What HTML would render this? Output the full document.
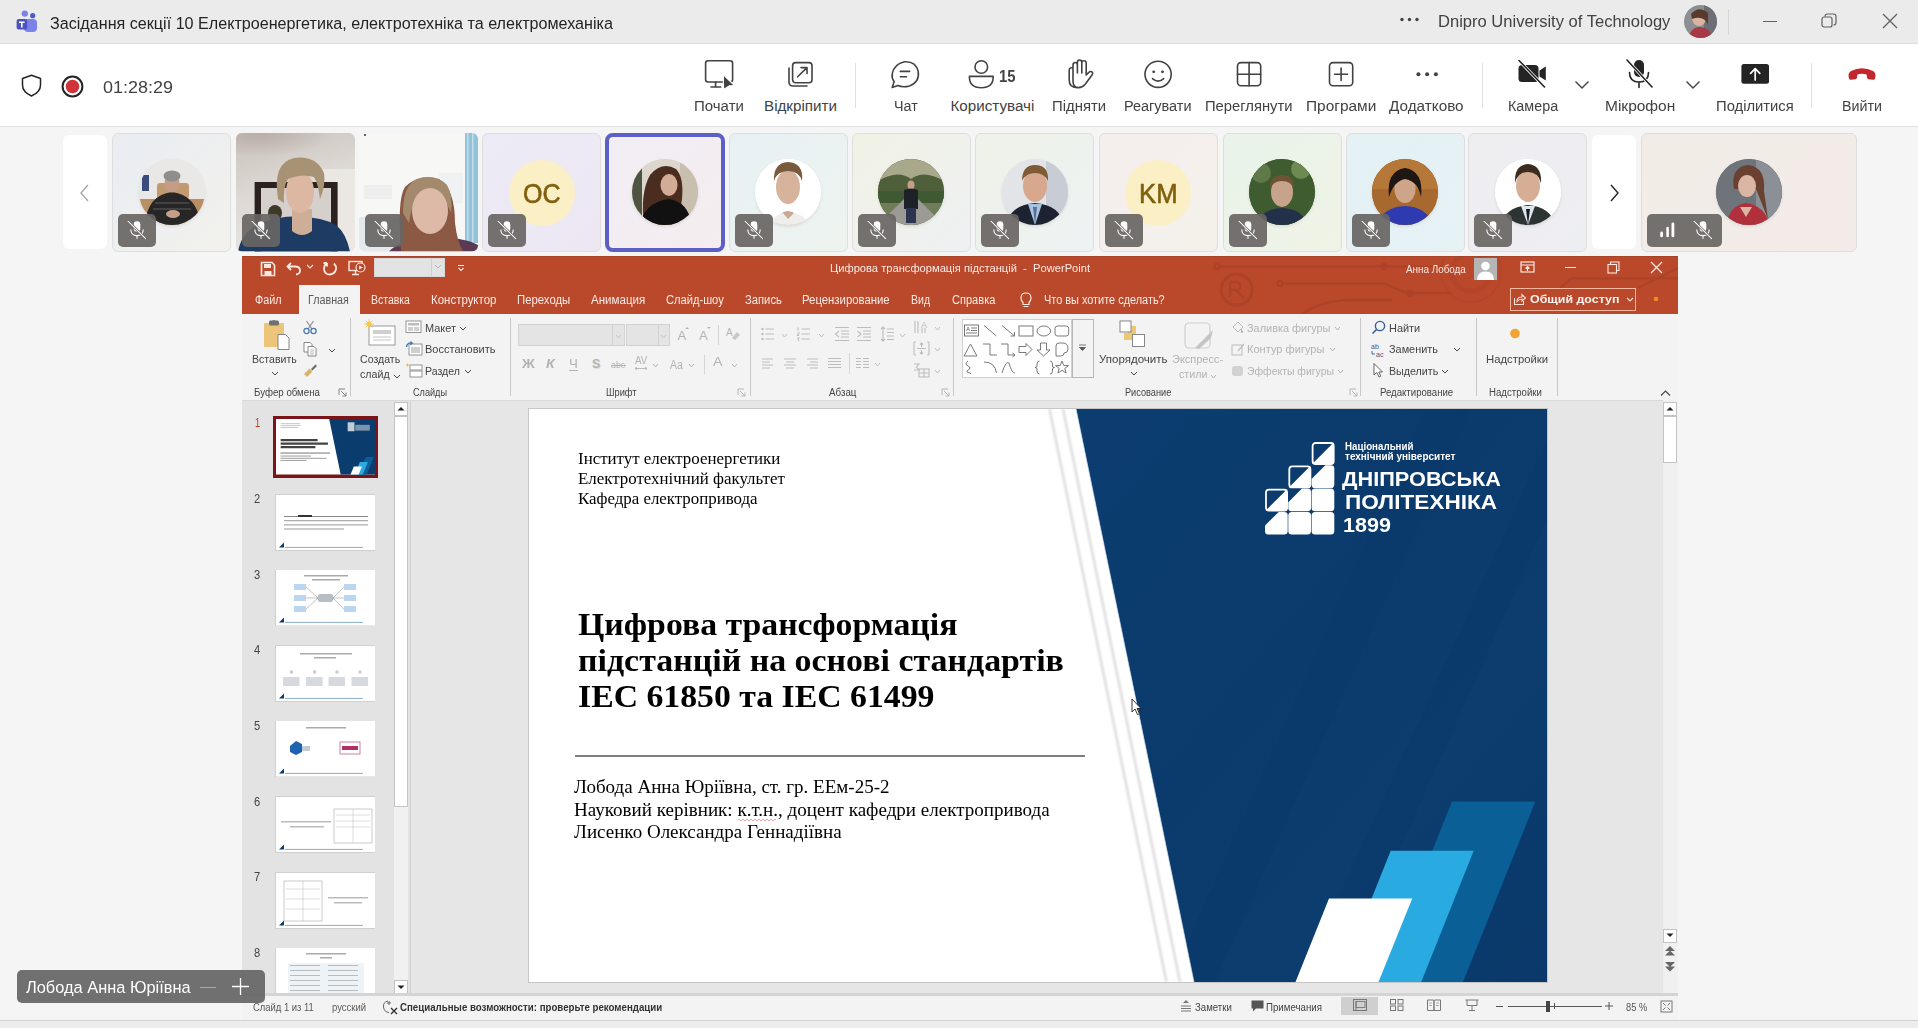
<!DOCTYPE html>
<html><head><meta charset="utf-8"><style>
html,body{margin:0;padding:0;}
body{width:1918px;height:1028px;position:relative;overflow:hidden;background:#f5f5f5;font-family:'Liberation Sans', sans-serif;}
.t{position:absolute;white-space:nowrap;transform-origin:0 0;}
.r{position:absolute;}
</style></head><body>
<div class="r" style="left:0px;top:0px;width:1918px;height:43px;background:#ebebeb;"></div>
<div class="r" style="left:0px;top:43px;width:1918px;height:1px;background:#dcdcdc;"></div>
<div class="r" style="left:0px;top:44px;width:1918px;height:82px;background:#ffffff;"></div>
<div class="r" style="left:0px;top:126px;width:1918px;height:1px;background:#e1e1e1;"></div>
<svg class="r" style="left:16px;top:10px;" width="22" height="23" viewBox="0 0 22 23">
<circle cx="8.8" cy="3.6" r="3.2" fill="#7b83eb"/><circle cx="16.7" cy="5.7" r="2.6" fill="#5059c9"/>
<rect x="8" y="9" width="13" height="13" rx="4" fill="#7b83eb"/>
<rect x="0.6" y="9" width="10.6" height="10.4" rx="2" fill="#4b53bc"/>
<path d="M3 11.5h5.6v1.5H6.6V17.5H5V13H3z" fill="#fff"/></svg>
<div id="title" class="t" style="left:50px;top:14.86px;font-size:17.2px;line-height:17.2px;color:#242424;font-weight:400;font-family:'Liberation Sans', sans-serif;transform:scaleX(0.9383);">Засідання секції 10 Електроенергетика, електротехніка та електромеханіка</div>
<svg class="r" style="left:1400px;top:17px;" width="19" height="5" viewBox="0 0 19 5"><circle cx="2" cy="2.5" r="1.7" fill="#424242"/><circle cx="9.5" cy="2.5" r="1.7" fill="#424242"/><circle cx="17" cy="2.5" r="1.7" fill="#424242"/></svg>
<div id="org" class="t" style="left:1438px;top:12.86px;font-size:17.2px;line-height:17.2px;color:#424242;font-weight:400;font-family:'Liberation Sans', sans-serif;transform:scaleX(0.9627);">Dnipro University of Technology</div>
<svg class="r" style="left:1684px;top:5px;" width="33" height="33" viewBox="0 0 33 33"><defs><clipPath id="ca"><circle cx="16.5" cy="16.5" r="16.5"/></clipPath></defs>
<g clip-path="url(#ca)"><rect width="33" height="33" fill="#8d8f94"/><rect x="20" y="0" width="13" height="33" fill="#6c7076"/>
<ellipse cx="15" cy="13" rx="7" ry="8" fill="#d9b4a0"/><path d="M7 9 Q15 0 24 8 L24 20 Q20 10 8 14z" fill="#5a3a2c"/>
<path d="M4 33 Q8 21 16 22 Q26 22 28 33z" fill="#a83a45"/></g></svg>
<div class="r" style="left:1728px;top:9px;width:1px;height:26px;background:#d6d6d6;"></div>
<div class="r" style="left:1763px;top:21px;width:14px;height:1.2px;background:#616161;"></div>
<svg class="r" style="left:1821px;top:13px;" width="16" height="16" viewBox="0 0 16 16"><rect x="1" y="4" width="10" height="10" rx="2" fill="none" stroke="#616161" stroke-width="1.2"/><path d="M4 3.5 Q4 1 6.5 1 H12.5 Q15 1 15 3.5 V9.5 Q15 12 12.5 12" fill="none" stroke="#616161" stroke-width="1.2"/></svg>
<svg class="r" style="left:1882px;top:13px;" width="16" height="16" viewBox="0 0 16 16"><path d="M1 1L15 15M15 1L1 15" stroke="#616161" stroke-width="1.3"/></svg>
<svg class="r" style="left:21px;top:74px;" width="21" height="23" viewBox="0 0 21 23"><path d="M10.5 1.2 L19.5 4.5 V11 Q19.5 18 10.5 22 Q1.5 18 1.5 11 V4.5z" fill="none" stroke="#242424" stroke-width="1.5" stroke-linejoin="round"/></svg>
<svg class="r" style="left:61px;top:75px;" width="23" height="23" viewBox="0 0 23 23"><circle cx="11.5" cy="11.5" r="9.9" fill="none" stroke="#242424" stroke-width="2"/><circle cx="11.5" cy="11.5" r="6.8" fill="#d13438"/></svg>
<div id="timer" class="t" style="left:103px;top:78.86px;font-size:17.2px;line-height:17.2px;color:#424242;font-weight:400;font-family:'Liberation Sans', sans-serif;transform:scaleX(1.0448);">01:28:29</div>
<svg class="r" style="left:700px;top:56px;" width="40" height="38" viewBox="0 0 40 38"><rect x="5.6" y="4.8" width="27" height="21.2" rx="2.5" fill="none" stroke="#424242" stroke-width="1.6" stroke-linecap="round" stroke-linejoin="round"/><path d="M15.6 26v5M11 31h9.7" fill="none" stroke="#424242" stroke-width="1.6" stroke-linecap="round" stroke-linejoin="round"/><path d="M23.2 18.5 L34.6 29.6 L29.5 29.8 L23.6 33.5z" fill="#424242" stroke="#fff" stroke-width="1.2"/></svg>
<svg class="r" style="left:785px;top:58px;" width="32" height="32" viewBox="0 0 32 32"><rect x="7.6" y="4.6" width="19.4" height="20.1" rx="3" fill="none" stroke="#424242" stroke-width="1.6" stroke-linecap="round" stroke-linejoin="round"/><path d="M4 10 V24 Q4 28 8 28 H22" fill="none" stroke="#424242" stroke-width="1.6" stroke-linecap="round" stroke-linejoin="round"/><path d="M12.6 18.8 L22 9.6 M16 9.6 H22 V15.6" fill="none" stroke="#424242" stroke-width="1.6" stroke-linecap="round" stroke-linejoin="round"/></svg>
<div class="r" style="left:855px;top:63px;width:1px;height:45px;background:#e0e0e0;"></div>
<svg class="r" style="left:888px;top:58px;" width="34" height="34" viewBox="0 0 34 34"><path d="M4.2 29.5 L6.1 23.8 Q3.4 19.7 4.3 15.6 Q6 6.2 16.5 3.8 Q27.7 3 30.2 13.4 Q31.8 24 21.5 28 Q15 29.8 9.8 27.6 Z" fill="none" stroke="#424242" stroke-width="1.6" stroke-linecap="round" stroke-linejoin="round"/><path d="M12.3 13.4 H21.6 M12.3 18.8 H18.5" fill="none" stroke="#424242" stroke-width="1.6" stroke-linecap="round" stroke-linejoin="round"/></svg>
<svg class="r" style="left:965px;top:56px;" width="32" height="34" viewBox="0 0 32 34"><circle cx="16.3" cy="11" r="6.3" fill="none" stroke="#424242" stroke-width="1.6" stroke-linecap="round" stroke-linejoin="round"/><path d="M4.4 20.4 H28.2 Q28.4 31.7 16.3 31.7 Q4.2 31.7 4.4 20.4z" fill="none" stroke="#424242" stroke-width="1.6" stroke-linecap="round" stroke-linejoin="round"/></svg>
<div id="cnt" class="t" style="left:999.4px;top:68.61px;font-size:15.8px;line-height:15.8px;color:#424242;font-weight:700;font-family:'Liberation Sans', sans-serif;transform:scaleX(0.9389);">15</div>
<svg class="r" style="left:1065px;top:56px;" width="30" height="36" viewBox="0 0 30 36"><path d="M8 22 V9 Q8 6.5 10.2 6.5 Q12.4 6.5 12.4 9 V17 M12.4 17 V6.5 Q12.4 4 14.6 4 Q16.8 4 16.8 6.5 V17 M16.8 17 V7 Q16.8 4.8 19 4.8 Q21.2 4.8 21.2 7 V19 L23.6 16.6 Q25.6 14.6 27.4 16.3 Q28.3 17.4 27 19 L20 28.5 Q17.5 31.6 13.5 31.6 Q8 31.6 8 25 V22 M8 12 Q4.2 11 4.2 14.8 V24 Q4.2 31.5 12 31.6" fill="none" stroke="#424242" stroke-width="1.6" stroke-linecap="round" stroke-linejoin="round"/></svg>
<svg class="r" style="left:1142px;top:58px;" width="34" height="34" viewBox="0 0 34 34"><circle cx="16.1" cy="16.3" r="13.1" fill="none" stroke="#424242" stroke-width="1.6" stroke-linecap="round" stroke-linejoin="round"/><circle cx="11.7" cy="13.8" r="1.4" fill="#424242"/><circle cx="20.5" cy="13.8" r="1.4" fill="#424242"/><path d="M10.5 20.6 Q16.1 25.6 21.7 20.6" fill="none" stroke="#424242" stroke-width="1.6" stroke-linecap="round" stroke-linejoin="round"/></svg>
<svg class="r" style="left:1234px;top:60px;" width="30" height="30" viewBox="0 0 30 30"><rect x="3.5" y="2.6" width="23.2" height="23.2" rx="3.5" fill="none" stroke="#424242" stroke-width="1.6" stroke-linecap="round" stroke-linejoin="round"/><path d="M15.1 2.6 V25.8 M3.5 14.2 H26.7" fill="none" stroke="#424242" stroke-width="1.6" stroke-linecap="round" stroke-linejoin="round"/></svg>
<svg class="r" style="left:1326px;top:60px;" width="30" height="30" viewBox="0 0 30 30"><rect x="3.5" y="2.6" width="23.2" height="23.2" rx="3.5" fill="none" stroke="#424242" stroke-width="1.6" stroke-linecap="round" stroke-linejoin="round"/><path d="M15.1 8 V20.5 M8.6 14.2 H21.6" fill="none" stroke="#424242" stroke-width="1.6" stroke-linecap="round" stroke-linejoin="round"/></svg>
<svg class="r" style="left:1414px;top:70px;" width="26" height="9" viewBox="0 0 26 9"><circle cx="4.4" cy="4.3" r="2" fill="#424242"/><circle cx="13.1" cy="4.3" r="2" fill="#424242"/><circle cx="21.9" cy="4.3" r="2" fill="#424242"/></svg>
<div class="r" style="left:1482px;top:63px;width:1px;height:45px;background:#e0e0e0;"></div>
<svg class="r" style="left:1514px;top:56px;" width="36" height="36" viewBox="0 0 36 36"><rect x="4.5" y="9" width="20" height="17" rx="3.5" fill="#242424"/><path d="M25.5 14.5 L31.8 10.5 V24.5 L25.5 20.5z" fill="#242424"/><path d="M5 4.5 L30.5 31" stroke="#fff" stroke-width="3.2"/><path d="M5 4.5 L30.5 31" stroke="#242424" stroke-width="1.6" stroke-linecap="round"/></svg>
<svg class="r" style="left:1573px;top:79px;" width="18" height="12" viewBox="0 0 18 12"><path d="M2.5 2.5 L9 9 L15.5 2.5" fill="none" stroke="#424242" stroke-width="1.4"/></svg>
<svg class="r" style="left:1622px;top:56px;" width="36" height="36" viewBox="0 0 36 36"><rect x="12" y="4" width="10" height="17" rx="5" fill="#242424"/><path d="M7.5 16.5 Q7.5 26 17 26 Q26.5 26 26.5 16.5 M17 26 V31.5" fill="none" stroke="#242424" stroke-width="1.6" stroke-linecap="round"/><path d="M5 4 L30 31" stroke="#fff" stroke-width="3.2"/><path d="M5 4 L30 31" stroke="#242424" stroke-width="1.6" stroke-linecap="round"/></svg>
<svg class="r" style="left:1684px;top:79px;" width="18" height="12" viewBox="0 0 18 12"><path d="M2.5 2.5 L9 9 L15.5 2.5" fill="none" stroke="#424242" stroke-width="1.4"/></svg>
<svg class="r" style="left:1738px;top:60px;" width="34" height="30" viewBox="0 0 34 30"><rect x="3.4" y="4" width="27.6" height="19.8" rx="2.5" fill="#242424"/><path d="M17.2 20 V9 M12.6 13.4 L17.2 8.6 L21.8 13.4" fill="none" stroke="#fff" stroke-width="1.7" stroke-linecap="round" stroke-linejoin="round"/></svg>
<div class="r" style="left:1811px;top:63px;width:1px;height:45px;background:#e0e0e0;"></div>
<svg class="r" style="left:1845px;top:62px;" width="34" height="22" viewBox="0 0 34 22"><path d="M3.6 14.5 Q3 11 6 9 Q17 3.5 28 9 Q31 11 30.4 14.5 L30 16.5 Q29.5 18 28 17.8 L23.5 17.2 Q22.2 17 22 15.6 L21.6 12.6 Q17 11 12.4 12.6 L12 15.6 Q11.8 17 10.5 17.2 L6 17.8 Q4.5 18 4 16.5z" fill="#c4262e"/></svg>
<div id="t4" class="t" style="left:693.6px;top:97.51px;font-size:15.2px;line-height:15.2px;color:#424242;font-weight:400;font-family:'Liberation Sans', sans-serif;transform:scaleX(0.9882);">Почати</div>
<div id="t5" class="t" style="left:764px;top:97.51px;font-size:15.2px;line-height:15.2px;color:#424242;font-weight:400;font-family:'Liberation Sans', sans-serif;">Відкріпити</div>
<div id="t6" class="t" style="left:894px;top:97.51px;font-size:15.2px;line-height:15.2px;color:#424242;font-weight:400;font-family:'Liberation Sans', sans-serif;transform:scaleX(0.9400);">Чат</div>
<div id="t7" class="t" style="left:950.5px;top:97.51px;font-size:15.2px;line-height:15.2px;color:#424242;font-weight:400;font-family:'Liberation Sans', sans-serif;">Користувачі</div>
<div id="t8" class="t" style="left:1052px;top:97.51px;font-size:15.2px;line-height:15.2px;color:#424242;font-weight:400;font-family:'Liberation Sans', sans-serif;transform:scaleX(0.9818);">Підняти</div>
<div id="t9" class="t" style="left:1124px;top:97.51px;font-size:15.2px;line-height:15.2px;color:#424242;font-weight:400;font-family:'Liberation Sans', sans-serif;transform:scaleX(0.9521);">Реагувати</div>
<div id="t10" class="t" style="left:1205px;top:97.51px;font-size:15.2px;line-height:15.2px;color:#424242;font-weight:400;font-family:'Liberation Sans', sans-serif;transform:scaleX(0.9722);">Переглянути</div>
<div id="t11" class="t" style="left:1305.7px;top:97.51px;font-size:15.2px;line-height:15.2px;color:#424242;font-weight:400;font-family:'Liberation Sans', sans-serif;transform:scaleX(1.0159);">Програми</div>
<div id="t12" class="t" style="left:1389px;top:97.51px;font-size:15.2px;line-height:15.2px;color:#424242;font-weight:400;font-family:'Liberation Sans', sans-serif;transform:scaleX(1.0068);">Додатково</div>
<div id="t13" class="t" style="left:1507.6px;top:97.51px;font-size:15.2px;line-height:15.2px;color:#424242;font-weight:400;font-family:'Liberation Sans', sans-serif;transform:scaleX(0.9453);">Камера</div>
<div id="t14" class="t" style="left:1605px;top:97.51px;font-size:15.2px;line-height:15.2px;color:#424242;font-weight:400;font-family:'Liberation Sans', sans-serif;transform:scaleX(1.0203);">Мікрофон</div>
<div id="t15" class="t" style="left:1715.7px;top:97.51px;font-size:15.2px;line-height:15.2px;color:#424242;font-weight:400;font-family:'Liberation Sans', sans-serif;transform:scaleX(0.9737);">Поділитися</div>
<div id="t16" class="t" style="left:1841.7px;top:97.51px;font-size:15.2px;line-height:15.2px;color:#424242;font-weight:400;font-family:'Liberation Sans', sans-serif;transform:scaleX(0.9372);">Вийти</div>
<div class="r" style="left:0px;top:127px;width:1918px;height:129px;background:#f5f5f5;"></div>
<div class="r" style="left:63px;top:135px;width:44px;height:114px;background:#ffffff;border-radius:6px;"></div>
<svg class="r" style="left:78px;top:183px;" width="14" height="20" viewBox="0 0 14 20"><path d="M10 2 L3 10 L10 18" fill="none" stroke="#a8a8a8" stroke-width="1.4"/></svg>
<div class="r" style="left:112px;top:133px;width:119px;height:118.5px;background:linear-gradient(135deg,#e9edf2,#f2f1ec);border:1px solid #dedede;box-sizing:border-box;border-radius:6px;"></div>
<svg class="r" style="left:136px;top:156px;" width="72" height="74" viewBox="0 0 72 74"><defs><clipPath id="av1"><circle cx="36" cy="36" r="33"/></clipPath>
<filter id="sh1" x="-20%" y="-20%" width="140%" height="140%"><feGaussianBlur stdDeviation="1.5"/></filter></defs>
<circle cx="36" cy="37.5" r="33" fill="rgba(0,0,0,0.10)" filter="url(#sh1)"/>
<g clip-path="url(#av1)"><g transform="translate(3,3)"><rect width="66" height="66" fill="#e9e8e6"/><rect x="0" y="0" width="66" height="66" fill="#e9e8e6"/><rect x="3" y="16" width="7" height="16" fill="#3b4c7c"/>
<rect x="0" y="40" width="66" height="26" fill="#b88e62"/><rect x="18" y="24" width="32" height="16" rx="3" fill="#c29a70"/>
<path d="M6 66 Q8 36 33 33 Q58 36 62 66z" fill="#262626"/><path d="M16 44 H50 M14 50 H52" stroke="#5c5c5c" stroke-width="1.2"/>
<ellipse cx="33" cy="24" rx="7.5" ry="9.5" fill="#c59d86"/><ellipse cx="33" cy="17" rx="8.5" ry="5.5" fill="#8e8e8e"/>
<ellipse cx="34" cy="55" rx="7" ry="4" fill="#c79f88"/></g></g></svg>
<div class="r" style="left:118px;top:214px;width:38px;height:33px;background:rgba(104,101,99,0.92);border-radius:5px;"></div><svg class="r" style="left:126px;top:221px;" width="22" height="20" viewBox="0 0 22 20"><rect x="7.7" y="0.3" width="6.6" height="10.5" rx="3.3" fill="#fff"/><path d="M4.8 8.5 Q4.8 14.6 11 14.6 Q17.2 14.6 17.2 8.5 M11 14.6 V17.8" fill="none" stroke="#fff" stroke-width="1.1"/><path d="M2 0.2 L19.6 17.6" stroke="#6a6866" stroke-width="2.6"/><path d="M2 0.2 L19.6 17.6" stroke="#fff" stroke-width="1.1" stroke-linecap="round"/></svg>
<svg class="r" style="left:236px;top:133px;" width="119" height="118.5" viewBox="0 0 119 118.5"><defs><clipPath id="v2"><rect width="119" height="118.5" rx="6"/></clipPath>
<linearGradient id="w2" x1="0" y1="0" x2="0.3" y2="1"><stop offset="0" stop-color="#c9c1bb"/><stop offset="0.5" stop-color="#ddd8d4"/><stop offset="1" stop-color="#e8e5e2"/></linearGradient>
<radialGradient id="ceil" cx="0.2" cy="0" r="0.6"><stop offset="0" stop-color="#b8aea6"/><stop offset="1" stop-color="#b8aea6" stop-opacity="0"/></radialGradient></defs>
<g clip-path="url(#v2)"><rect width="119" height="118.5" fill="url(#w2)"/><rect width="119" height="40" fill="url(#ceil)"/>
<rect x="84" y="36" width="35" height="83" fill="#ebe8e4"/>
<rect x="18.6" y="49" width="83" height="72" fill="#2b211f"/><rect x="25" y="55" width="70" height="66" fill="#d5d0cb"/>
<ellipse cx="39" cy="80" rx="7" ry="8" fill="#3d3a2a"/>
<path d="M2 118.5 Q6 96 30 88 Q50 82 64 84 Q86 84 100 92 Q110 100 114 118.5z" fill="#1e3b63"/>
<path d="M56 76 H76 V98 Q66 106 56 98z" fill="#cfae98"/>
<ellipse cx="64" cy="59" rx="14" ry="21" fill="#dcb7a2"/>
<path d="M42 66 Q36 30 58 25 Q80 22 88 40 Q90 52 84 66 Q82 50 78 44 Q66 40 52 46 Q47 54 48 70z" fill="#a89274"/></g></svg>
<div class="r" style="left:242px;top:214px;width:38px;height:33px;background:rgba(104,101,99,0.92);border-radius:5px;"></div><svg class="r" style="left:250px;top:221px;" width="22" height="20" viewBox="0 0 22 20"><rect x="7.7" y="0.3" width="6.6" height="10.5" rx="3.3" fill="#fff"/><path d="M4.8 8.5 Q4.8 14.6 11 14.6 Q17.2 14.6 17.2 8.5 M11 14.6 V17.8" fill="none" stroke="#fff" stroke-width="1.1"/><path d="M2 0.2 L19.6 17.6" stroke="#6a6866" stroke-width="2.6"/><path d="M2 0.2 L19.6 17.6" stroke="#fff" stroke-width="1.1" stroke-linecap="round"/></svg>
<svg class="r" style="left:359px;top:133px;" width="119" height="118.5" viewBox="0 0 119 118.5"><defs><clipPath id="v3"><rect width="119" height="118.5" rx="6"/></clipPath></defs>
<g clip-path="url(#v3)"><rect width="119" height="118.5" fill="#f7f7f6"/>
<rect x="5" y="52" width="28" height="14" fill="#eeeeee"/><rect x="80" y="40" width="24" height="30" fill="#eff1f2"/>
<rect x="106" y="0" width="13" height="110" fill="#93c3d9"/><rect x="108" y="0" width="1.5" height="110" fill="#c4dde9"/><rect x="113" y="0" width="1.5" height="110" fill="#c4dde9"/>
<rect x="0" y="84" width="40" height="35" fill="#e3e9ec"/><circle cx="6" cy="2" r="1" fill="#333"/>
<path d="M30 118.5 Q42 106 70 104 Q106 104 119 112 V118.5z" fill="#5c3a56"/>
<path d="M42 118 Q38 66 46 54 Q60 40 80 46 Q96 56 96 90 Q98 108 104 118z" fill="#8c5a44"/>
<path d="M44 80 Q44 52 58 46 Q76 40 88 52 Q94 62 92 80 Q84 58 68 58 Q54 60 50 90z" fill="#a48a6c"/>
<ellipse cx="71" cy="78" rx="18" ry="23" fill="#ddb9a8"/></g></svg>
<div class="r" style="left:365px;top:214px;width:38px;height:33px;background:rgba(104,101,99,0.92);border-radius:5px;"></div><svg class="r" style="left:373px;top:221px;" width="22" height="20" viewBox="0 0 22 20"><rect x="7.7" y="0.3" width="6.6" height="10.5" rx="3.3" fill="#fff"/><path d="M4.8 8.5 Q4.8 14.6 11 14.6 Q17.2 14.6 17.2 8.5 M11 14.6 V17.8" fill="none" stroke="#fff" stroke-width="1.1"/><path d="M2 0.2 L19.6 17.6" stroke="#6a6866" stroke-width="2.6"/><path d="M2 0.2 L19.6 17.6" stroke="#fff" stroke-width="1.1" stroke-linecap="round"/></svg>
<div class="r" style="left:482px;top:133px;width:119px;height:118.5px;background:linear-gradient(135deg,#ecebf6,#ede7f3);border:1px solid #dedede;box-sizing:border-box;border-radius:6px;"></div>
<svg class="r" style="left:506px;top:158px;" width="72" height="72" viewBox="0 0 72 72"><circle cx="36" cy="35" r="33" fill="#fbefc6"/></svg>
<div id="oc" class="t" style="left:523px;top:180.81px;font-size:27px;line-height:27px;color:#7f5e0c;font-weight:400;font-family:'Liberation Sans', sans-serif;transform:scaleX(0.9268);-webkit-text-stroke:0.6px #7f5e0c;">OC</div>
<div class="r" style="left:488px;top:214px;width:38px;height:33px;background:rgba(104,101,99,0.92);border-radius:5px;"></div><svg class="r" style="left:496px;top:221px;" width="22" height="20" viewBox="0 0 22 20"><rect x="7.7" y="0.3" width="6.6" height="10.5" rx="3.3" fill="#fff"/><path d="M4.8 8.5 Q4.8 14.6 11 14.6 Q17.2 14.6 17.2 8.5 M11 14.6 V17.8" fill="none" stroke="#fff" stroke-width="1.1"/><path d="M2 0.2 L19.6 17.6" stroke="#6a6866" stroke-width="2.6"/><path d="M2 0.2 L19.6 17.6" stroke="#fff" stroke-width="1.1" stroke-linecap="round"/></svg>
<div class="r" style="left:605px;top:133px;width:119px;height:118.5px;background:linear-gradient(135deg,#f1eef5,#f5edef);border:1px solid #dedede;box-sizing:border-box;border-radius:6px;"></div>
<div class="r" style="left:605px;top:133px;width:119.5px;height:119px;background:transparent;border:4.5px solid #5b5fc7;box-sizing:border-box;border-radius:8px;"></div>
<svg class="r" style="left:629px;top:156px;" width="72" height="74" viewBox="0 0 72 74"><defs><clipPath id="av2"><circle cx="36" cy="36" r="33"/></clipPath>
<filter id="sh2" x="-20%" y="-20%" width="140%" height="140%"><feGaussianBlur stdDeviation="1.5"/></filter></defs>
<circle cx="36" cy="37.5" r="33" fill="rgba(0,0,0,0.10)" filter="url(#sh2)"/>
<g clip-path="url(#av2)"><g transform="translate(3,3)"><rect width="66" height="66" fill="#dcd6cc"/><rect width="66" height="66" fill="#dcd6cc"/><rect x="0" y="0" width="10" height="66" fill="#4f5440"/><rect x="48" y="0" width="18" height="66" fill="#c9bfae"/>
<path d="M12 66 Q8 34 18 16 Q30 2 44 10 Q52 18 50 40 L46 66z" fill="#4b2d20"/>
<ellipse cx="37" cy="26" rx="8.5" ry="11" fill="#d3ab96"/>
<path d="M8 66 Q12 44 36 40 Q56 42 60 66z" fill="#111111"/></g></g></svg>
<div class="r" style="left:729px;top:133px;width:119px;height:118.5px;background:linear-gradient(135deg,#e7f1f4,#eef3ef);border:1px solid #dedede;box-sizing:border-box;border-radius:6px;"></div>
<svg class="r" style="left:752px;top:156px;" width="72" height="74" viewBox="0 0 72 74"><defs><clipPath id="av3"><circle cx="36" cy="36" r="33"/></clipPath>
<filter id="sh3" x="-20%" y="-20%" width="140%" height="140%"><feGaussianBlur stdDeviation="1.5"/></filter></defs>
<circle cx="36" cy="37.5" r="33" fill="rgba(0,0,0,0.10)" filter="url(#sh3)"/>
<g clip-path="url(#av3)"><g transform="translate(3,3)"><rect width="66" height="66" fill="#fff"/><rect width="66" height="66" fill="#ffffff"/>
<path d="M20 66 Q24 52 33 52 Q42 52 48 66z" fill="#c9a894"/><path d="M14 66 Q18 56 28 54 L33 60 L39 54 Q50 56 54 66z" fill="#f0eeeb"/>
<ellipse cx="33" cy="28" rx="12" ry="17" fill="#d8b39c"/>
<path d="M19 22 Q18 4 33 3 Q49 4 47 22 Q44 12 33 12 Q22 12 19 22z" fill="#7a5a3e"/></g></g></svg>
<div class="r" style="left:735px;top:214px;width:38px;height:33px;background:rgba(104,101,99,0.92);border-radius:5px;"></div><svg class="r" style="left:743px;top:221px;" width="22" height="20" viewBox="0 0 22 20"><rect x="7.7" y="0.3" width="6.6" height="10.5" rx="3.3" fill="#fff"/><path d="M4.8 8.5 Q4.8 14.6 11 14.6 Q17.2 14.6 17.2 8.5 M11 14.6 V17.8" fill="none" stroke="#fff" stroke-width="1.1"/><path d="M2 0.2 L19.6 17.6" stroke="#6a6866" stroke-width="2.6"/><path d="M2 0.2 L19.6 17.6" stroke="#fff" stroke-width="1.1" stroke-linecap="round"/></svg>
<div class="r" style="left:852px;top:133px;width:119px;height:118.5px;background:linear-gradient(135deg,#f1f2e4,#eef0f3);border:1px solid #dedede;box-sizing:border-box;border-radius:6px;"></div>
<svg class="r" style="left:875px;top:156px;" width="72" height="74" viewBox="0 0 72 74"><defs><clipPath id="av4"><circle cx="36" cy="36" r="33"/></clipPath>
<filter id="sh4" x="-20%" y="-20%" width="140%" height="140%"><feGaussianBlur stdDeviation="1.5"/></filter></defs>
<circle cx="36" cy="37.5" r="33" fill="rgba(0,0,0,0.10)" filter="url(#sh4)"/>
<g clip-path="url(#av4)"><g transform="translate(3,3)"><rect width="66" height="66" fill="#6f7d5a"/><rect width="66" height="66" fill="#6f7d5a"/><rect x="0" y="0" width="66" height="22" fill="#a9a88a"/>
<path d="M0 22 Q20 10 33 20 Q46 10 66 22 V40 H0z" fill="#4f5f3a"/><rect x="0" y="32" width="66" height="12" fill="#3f5a32"/>
<path d="M0 66 L26 40 H40 L66 66z" fill="#9b9a94"/>
<ellipse cx="33" cy="26" rx="3.5" ry="4.5" fill="#c4a088"/><path d="M26 50 V31 Q33 28 40 31 V50z" fill="#1e2128"/><rect x="28" y="49" width="10" height="15" fill="#2b3550"/></g></g></svg>
<div class="r" style="left:858px;top:214px;width:38px;height:33px;background:rgba(104,101,99,0.92);border-radius:5px;"></div><svg class="r" style="left:866px;top:221px;" width="22" height="20" viewBox="0 0 22 20"><rect x="7.7" y="0.3" width="6.6" height="10.5" rx="3.3" fill="#fff"/><path d="M4.8 8.5 Q4.8 14.6 11 14.6 Q17.2 14.6 17.2 8.5 M11 14.6 V17.8" fill="none" stroke="#fff" stroke-width="1.1"/><path d="M2 0.2 L19.6 17.6" stroke="#6a6866" stroke-width="2.6"/><path d="M2 0.2 L19.6 17.6" stroke="#fff" stroke-width="1.1" stroke-linecap="round"/></svg>
<div class="r" style="left:975px;top:133px;width:119px;height:118.5px;background:linear-gradient(135deg,#eef2e8,#eef2f4);border:1px solid #dedede;box-sizing:border-box;border-radius:6px;"></div>
<svg class="r" style="left:999px;top:156px;" width="72" height="74" viewBox="0 0 72 74"><defs><clipPath id="av5"><circle cx="36" cy="36" r="33"/></clipPath>
<filter id="sh5" x="-20%" y="-20%" width="140%" height="140%"><feGaussianBlur stdDeviation="1.5"/></filter></defs>
<circle cx="36" cy="37.5" r="33" fill="rgba(0,0,0,0.10)" filter="url(#sh5)"/>
<g clip-path="url(#av5)"><g transform="translate(3,3)"><rect width="66" height="66" fill="#e3e4e8"/><rect width="66" height="66" fill="#e3e4e8"/><rect x="44" y="0" width="22" height="66" fill="#c8ccd4"/>
<path d="M4 66 Q8 46 33 44 Q58 46 62 66z" fill="#1d2230"/><path d="M26 45 L33 66 L40 45z" fill="#a9c2e0"/><path d="M31 48 L33 66 L35 48z" fill="#5a6e94"/>
<ellipse cx="33" cy="27" rx="12" ry="16" fill="#d7a88e"/>
<path d="M20 22 Q20 6 33 6 Q47 6 46 22 Q42 14 33 14 Q24 14 20 22z" fill="#7f5b36"/></g></g></svg>
<div class="r" style="left:981px;top:214px;width:38px;height:33px;background:rgba(104,101,99,0.92);border-radius:5px;"></div><svg class="r" style="left:989px;top:221px;" width="22" height="20" viewBox="0 0 22 20"><rect x="7.7" y="0.3" width="6.6" height="10.5" rx="3.3" fill="#fff"/><path d="M4.8 8.5 Q4.8 14.6 11 14.6 Q17.2 14.6 17.2 8.5 M11 14.6 V17.8" fill="none" stroke="#fff" stroke-width="1.1"/><path d="M2 0.2 L19.6 17.6" stroke="#6a6866" stroke-width="2.6"/><path d="M2 0.2 L19.6 17.6" stroke="#fff" stroke-width="1.1" stroke-linecap="round"/></svg>
<div class="r" style="left:1099px;top:133px;width:119px;height:118.5px;background:linear-gradient(135deg,#f4eeee,#f4f1ea);border:1px solid #dedede;box-sizing:border-box;border-radius:6px;"></div>
<svg class="r" style="left:1122px;top:158px;" width="72" height="72" viewBox="0 0 72 72"><circle cx="36" cy="35" r="33" fill="#fbefc6"/></svg>
<div id="km" class="t" style="left:1139px;top:180.81px;font-size:27px;line-height:27px;color:#7f5e0c;font-weight:400;font-family:'Liberation Sans', sans-serif;transform:scaleX(0.9512);-webkit-text-stroke:0.6px #7f5e0c;">KM</div>
<div class="r" style="left:1105px;top:214px;width:38px;height:33px;background:rgba(104,101,99,0.92);border-radius:5px;"></div><svg class="r" style="left:1113px;top:221px;" width="22" height="20" viewBox="0 0 22 20"><rect x="7.7" y="0.3" width="6.6" height="10.5" rx="3.3" fill="#fff"/><path d="M4.8 8.5 Q4.8 14.6 11 14.6 Q17.2 14.6 17.2 8.5 M11 14.6 V17.8" fill="none" stroke="#fff" stroke-width="1.1"/><path d="M2 0.2 L19.6 17.6" stroke="#6a6866" stroke-width="2.6"/><path d="M2 0.2 L19.6 17.6" stroke="#fff" stroke-width="1.1" stroke-linecap="round"/></svg>
<div class="r" style="left:1223px;top:133px;width:119px;height:118.5px;background:linear-gradient(135deg,#e9f3ea,#f0f3e6);border:1px solid #dedede;box-sizing:border-box;border-radius:6px;"></div>
<svg class="r" style="left:1246px;top:156px;" width="72" height="74" viewBox="0 0 72 74"><defs><clipPath id="av6"><circle cx="36" cy="36" r="33"/></clipPath>
<filter id="sh6" x="-20%" y="-20%" width="140%" height="140%"><feGaussianBlur stdDeviation="1.5"/></filter></defs>
<circle cx="36" cy="37.5" r="33" fill="rgba(0,0,0,0.10)" filter="url(#sh6)"/>
<g clip-path="url(#av6)"><g transform="translate(3,3)"><rect width="66" height="66" fill="#3f5b30"/><rect width="66" height="66" fill="#3f5b30"/><circle cx="12" cy="14" r="10" fill="#5f7a48"/><circle cx="52" cy="10" r="10" fill="#6c8a52"/>
<path d="M8 66 Q12 50 33 49 Q54 50 58 66z" fill="#23304a"/>
<ellipse cx="33" cy="33" rx="11" ry="15" fill="#c7a38c"/>
<path d="M21 30 Q20 16 33 16 Q46 16 45 30 Q42 22 33 22 Q24 22 21 30z" fill="#6e5434"/></g></g></svg>
<div class="r" style="left:1229px;top:214px;width:38px;height:33px;background:rgba(104,101,99,0.92);border-radius:5px;"></div><svg class="r" style="left:1237px;top:221px;" width="22" height="20" viewBox="0 0 22 20"><rect x="7.7" y="0.3" width="6.6" height="10.5" rx="3.3" fill="#fff"/><path d="M4.8 8.5 Q4.8 14.6 11 14.6 Q17.2 14.6 17.2 8.5 M11 14.6 V17.8" fill="none" stroke="#fff" stroke-width="1.1"/><path d="M2 0.2 L19.6 17.6" stroke="#6a6866" stroke-width="2.6"/><path d="M2 0.2 L19.6 17.6" stroke="#fff" stroke-width="1.1" stroke-linecap="round"/></svg>
<div class="r" style="left:1346px;top:133px;width:119px;height:118.5px;background:linear-gradient(135deg,#e4f1f5,#e6f2f4);border:1px solid #dedede;box-sizing:border-box;border-radius:6px;"></div>
<svg class="r" style="left:1369px;top:156px;" width="72" height="74" viewBox="0 0 72 74"><defs><clipPath id="av7"><circle cx="36" cy="36" r="33"/></clipPath>
<filter id="sh7" x="-20%" y="-20%" width="140%" height="140%"><feGaussianBlur stdDeviation="1.5"/></filter></defs>
<circle cx="36" cy="37.5" r="33" fill="rgba(0,0,0,0.10)" filter="url(#sh7)"/>
<g clip-path="url(#av7)"><g transform="translate(3,3)"><rect width="66" height="66" fill="#a8692f"/><rect width="66" height="66" fill="#a8692f"/><rect x="0" y="0" width="66" height="30" fill="#b67838"/>
<path d="M6 66 Q10 48 33 47 Q56 48 60 66z" fill="#2e3bb0"/>
<ellipse cx="33" cy="30" rx="10.5" ry="14" fill="#cfa58a"/>
<path d="M17 38 Q14 12 33 9 Q52 12 49 38 Q46 22 33 20 Q22 22 17 38z" fill="#1e1612"/></g></g></svg>
<div class="r" style="left:1352px;top:214px;width:38px;height:33px;background:rgba(104,101,99,0.92);border-radius:5px;"></div><svg class="r" style="left:1360px;top:221px;" width="22" height="20" viewBox="0 0 22 20"><rect x="7.7" y="0.3" width="6.6" height="10.5" rx="3.3" fill="#fff"/><path d="M4.8 8.5 Q4.8 14.6 11 14.6 Q17.2 14.6 17.2 8.5 M11 14.6 V17.8" fill="none" stroke="#fff" stroke-width="1.1"/><path d="M2 0.2 L19.6 17.6" stroke="#6a6866" stroke-width="2.6"/><path d="M2 0.2 L19.6 17.6" stroke="#fff" stroke-width="1.1" stroke-linecap="round"/></svg>
<div class="r" style="left:1468px;top:133px;width:119px;height:118.5px;background:linear-gradient(135deg,#efedf0,#edeef3);border:1px solid #dedede;box-sizing:border-box;border-radius:6px;"></div>
<svg class="r" style="left:1492px;top:156px;" width="72" height="74" viewBox="0 0 72 74"><defs><clipPath id="av8"><circle cx="36" cy="36" r="33"/></clipPath>
<filter id="sh8" x="-20%" y="-20%" width="140%" height="140%"><feGaussianBlur stdDeviation="1.5"/></filter></defs>
<circle cx="36" cy="37.5" r="33" fill="rgba(0,0,0,0.10)" filter="url(#sh8)"/>
<g clip-path="url(#av8)"><g transform="translate(3,3)"><rect width="66" height="66" fill="#fff"/><rect width="66" height="66" fill="#ffffff"/>
<path d="M6 66 Q10 48 33 46 Q56 48 60 66z" fill="#2b3432"/><path d="M26 47 L33 66 L40 47z" fill="#dfe7ee"/><path d="M31 50 L33 66 L35 50z" fill="#1a1a1a"/>
<ellipse cx="33" cy="27" rx="12" ry="16" fill="#d6ae96"/>
<path d="M20 24 Q19 6 33 5 Q47 6 46 24 Q43 13 33 13 Q23 13 20 24z" fill="#3c2c20"/></g></g></svg>
<div class="r" style="left:1474px;top:214px;width:38px;height:33px;background:rgba(104,101,99,0.92);border-radius:5px;"></div><svg class="r" style="left:1482px;top:221px;" width="22" height="20" viewBox="0 0 22 20"><rect x="7.7" y="0.3" width="6.6" height="10.5" rx="3.3" fill="#fff"/><path d="M4.8 8.5 Q4.8 14.6 11 14.6 Q17.2 14.6 17.2 8.5 M11 14.6 V17.8" fill="none" stroke="#fff" stroke-width="1.1"/><path d="M2 0.2 L19.6 17.6" stroke="#6a6866" stroke-width="2.6"/><path d="M2 0.2 L19.6 17.6" stroke="#fff" stroke-width="1.1" stroke-linecap="round"/></svg>
<div class="r" style="left:1592px;top:135px;width:44px;height:114px;background:#ffffff;border-radius:6px;"></div>
<svg class="r" style="left:1607px;top:183px;" width="14" height="20" viewBox="0 0 14 20"><path d="M4 2 L11 10 L4 18" fill="none" stroke="#242424" stroke-width="1.4"/></svg>
<div class="r" style="left:1641px;top:133px;width:216px;height:118.5px;background:linear-gradient(135deg,#f1ede6,#f3ebe9);border:1px solid #dedede;box-sizing:border-box;border-radius:6px;"></div>
<svg class="r" style="left:1713px;top:156px;" width="72" height="74" viewBox="0 0 72 74"><defs><clipPath id="av9"><circle cx="36" cy="36" r="33"/></clipPath>
<filter id="sh9" x="-20%" y="-20%" width="140%" height="140%"><feGaussianBlur stdDeviation="1.5"/></filter></defs>
<circle cx="36" cy="37.5" r="33" fill="rgba(0,0,0,0.10)" filter="url(#sh9)"/>
<g clip-path="url(#av9)"><g transform="translate(3,3)"><rect width="66" height="66" fill="#6f747a"/><rect width="66" height="66" fill="#6f747a"/><rect x="40" y="0" width="26" height="66" fill="#8a9096"/>
<path d="M18 30 Q14 8 32 6 Q50 8 48 32 L52 60 Q44 40 40 30z" fill="#6a4030"/>
<ellipse cx="31" cy="27" rx="9" ry="11" fill="#dcb6a4"/>
<path d="M10 66 Q14 46 30 44 Q48 46 54 66z" fill="#b0303c"/><path d="M24 48 L30 58 L36 48z" fill="#dcb6a4"/></g></g></svg>
<div class="r" style="left:1647px;top:214px;width:75px;height:33px;background:rgba(104,101,99,0.92);border-radius:5px;"></div>
<svg class="r" style="left:1657px;top:221px;" width="20" height="20" viewBox="0 0 20 20"><rect x="3.2" y="10.5" width="2.8" height="5.8" rx="1.4" fill="#fff"/><rect x="9.3" y="5.8" width="2.6" height="10.5" rx="1.3" fill="#fff"/><rect x="14.5" y="1.6" width="2.8" height="14.7" rx="1.4" fill="#fff"/></svg>
<svg class="r" style="left:1692px;top:221px;" width="22" height="20" viewBox="0 0 22 20"><rect x="7.7" y="0.3" width="6.6" height="10.5" rx="3.3" fill="#fff"/><path d="M4.8 8.5 Q4.8 14.6 11 14.6 Q17.2 14.6 17.2 8.5 M11 14.6 V17.8" fill="none" stroke="#fff" stroke-width="1.1"/><path d="M2 0.2 L19.6 17.6" stroke="#6a6866" stroke-width="2.6"/><path d="M2 0.2 L19.6 17.6" stroke="#fff" stroke-width="1.1" stroke-linecap="round"/></svg>
<div class="r" style="left:242px;top:256px;width:1436px;height:58px;background:#ba492c;"></div>
<svg class="r" style="left:242px;top:256px;" width="1436" height="58" viewBox="0 0 1436 58"><g fill="none" stroke="#a53f26" stroke-width="2.4" opacity="0.6">
<path d="M978 10.6 H1142 M1142 10.6 H1200"/><circle cx="975" cy="10.6" r="2.6"/><circle cx="1142" cy="10.6" r="2.6"/>
<path d="M1041 27.5 H1142 L1165 37 H1210"/><circle cx="1038" cy="27.5" r="2.6"/><circle cx="1168" cy="37.2" r="2.6"/>
<circle cx="994.7" cy="33.7" r="15.5" stroke-width="3.2"/><path d="M988 26 V41 M988 26 H996 Q1001 30 996 34 H988 M994 34 L1002 42" stroke-width="2.6"/>
<path d="M1060 58 Q1080 44 1110 44 H1150"/>
<circle cx="1229" cy="16" r="19" stroke-width="5" opacity="0.6"/><circle cx="1229" cy="16" r="30" stroke-width="2" opacity="0.5"/>
<path d="M1329 22.3 H1436 M1329 22.3 L1318 32 M1436 12 L1396 32"/></g>
<rect x="0" y="0" width="1436" height="1" fill="#9d3f27" opacity="0.6"/></svg>
<svg class="r" style="left:259px;top:260px;" width="18" height="18" viewBox="0 0 18 18"><path d="M2.5 2.5 H13 L15.5 5 V15.5 H2.5z" fill="none" stroke="#fde8e0" stroke-width="1.6"/><rect x="5" y="4" width="7" height="4" fill="#fde8e0"/><rect x="5.5" y="11" width="7" height="4.5" fill="#fde8e0"/></svg>
<svg class="r" style="left:285px;top:259px;" width="18" height="18" viewBox="0 0 18 18"><path d="M6 4 L2.5 7.5 L6 11 M2.5 7.5 H10 Q15 7.5 15 11.5 Q15 15 11 15.5" fill="none" stroke="#fde8e0" stroke-width="1.8"/></svg>
<svg class="r" style="left:306px;top:264px;" width="8" height="6" viewBox="0 0 8 6"><path d="M1 1 L4 4 L7 1" fill="none" stroke="#fde8e0" stroke-width="1.1"/></svg>
<svg class="r" style="left:321px;top:259px;" width="18" height="18" viewBox="0 0 18 18"><path d="M13 4.5 Q15.5 7 15 10 Q14 15 9 15.5 Q3.5 15.5 3 10 Q3 6 6 4 M6 4 H2.5 M6 4 V7.5" fill="none" stroke="#fde8e0" stroke-width="1.8"/></svg>
<svg class="r" style="left:347px;top:259px;" width="20" height="18" viewBox="0 0 20 18"><rect x="2" y="2.5" width="13" height="9" fill="none" stroke="#fde8e0" stroke-width="1.4"/><path d="M8.5 11.5 V15 M5 15.5 H12" stroke="#fde8e0" stroke-width="1.4"/><circle cx="13.5" cy="8.5" r="4.5" fill="#ba492c" stroke="#fde8e0" stroke-width="1.2"/><path d="M12 6.5 L16 8.5 L12 10.5z" fill="#fde8e0"/></svg>
<div class="r" style="left:374px;top:258px;width:71px;height:19px;background:#e3e3e3;border:1px solid #d6d6d6;box-sizing:border-box;"></div>
<div class="r" style="left:431px;top:259px;width:1px;height:17px;background:#cfcfcf;"></div>
<svg class="r" style="left:434px;top:264px;" width="8" height="6" viewBox="0 0 8 6"><path d="M1 1 L4 4 L7 1" fill="none" stroke="#b5b5b5" stroke-width="1"/></svg>
<svg class="r" style="left:457px;top:264px;" width="8" height="8" viewBox="0 0 8 8"><path d="M1 1.5 H7 M1.5 4 L4 6.5 L6.5 4" fill="none" stroke="#fde8e0" stroke-width="1.1"/></svg>
<div id="ppttitle" class="t" style="left:830px;top:263.30px;font-size:11.8px;line-height:11.8px;color:#fbe9e3;font-weight:400;font-family:'Liberation Sans', sans-serif;transform:scaleX(0.9455);">Цифрова трансформація підстанцій&nbsp; -&nbsp; PowerPoint</div>
<div id="user" class="t" style="left:1406px;top:263.55px;font-size:11.5px;line-height:11.5px;color:#fbe9e3;font-weight:400;font-family:'Liberation Sans', sans-serif;transform:scaleX(0.8571);">Анна Лобода</div>
<div class="r" style="left:1474px;top:258px;width:23px;height:22px;background:#b5b5b5;"></div>
<svg class="r" style="left:1474px;top:258px;" width="23" height="22" viewBox="0 0 23 22"><circle cx="11.5" cy="8" r="4.3" fill="#fff"/><path d="M3 22 Q3 13.5 11.5 13.5 Q20 13.5 20 22z" fill="#fff"/></svg>
<svg class="r" style="left:1520px;top:261px;" width="16" height="13" viewBox="0 0 16 13"><rect x="1" y="1" width="13" height="10" fill="none" stroke="#fde8e0" stroke-width="1.2"/><path d="M1 4 H14 M7.5 10 V5.5 M5.5 7.5 L7.5 5.5 L9.5 7.5" fill="none" stroke="#fde8e0" stroke-width="1.2"/></svg>
<div class="r" style="left:1565px;top:267px;width:11px;height:1.2px;background:#fde8e0;"></div>
<svg class="r" style="left:1607px;top:261px;" width="13" height="13" viewBox="0 0 13 13"><rect x="1" y="3.5" width="8.5" height="8.5" fill="none" stroke="#fde8e0" stroke-width="1.1"/><path d="M3.5 3.5 V1 H12 V9.5 H9.5" fill="none" stroke="#fde8e0" stroke-width="1.1"/></svg>
<svg class="r" style="left:1650px;top:261px;" width="13" height="13" viewBox="0 0 13 13"><path d="M1 1 L12 12 M12 1 L1 12" stroke="#fde8e0" stroke-width="1.3"/></svg>
<div class="r" style="left:299px;top:285px;width:61px;height:29px;background:#f3f3f3;"></div>
<div id="t21" class="t" style="left:255px;top:294.14px;font-size:12px;line-height:12px;color:#fbe9e3;font-weight:400;font-family:'Liberation Sans', sans-serif;transform:scaleX(0.9000);">Файл</div>
<div id="t22" class="t" style="left:307.8px;top:294.14px;font-size:12px;line-height:12px;color:#5a5a5a;font-weight:400;font-family:'Liberation Sans', sans-serif;transform:scaleX(0.8957);">Главная</div>
<div id="t23" class="t" style="left:370.7px;top:294.14px;font-size:12px;line-height:12px;color:#fbe9e3;font-weight:400;font-family:'Liberation Sans', sans-serif;transform:scaleX(0.8733);">Вставка</div>
<div id="t24" class="t" style="left:431px;top:294.14px;font-size:12px;line-height:12px;color:#fbe9e3;font-weight:400;font-family:'Liberation Sans', sans-serif;transform:scaleX(0.9559);">Конструктор</div>
<div id="t25" class="t" style="left:517px;top:294.14px;font-size:12px;line-height:12px;color:#fbe9e3;font-weight:400;font-family:'Liberation Sans', sans-serif;transform:scaleX(0.9464);">Переходы</div>
<div id="t26" class="t" style="left:591px;top:294.14px;font-size:12px;line-height:12px;color:#fbe9e3;font-weight:400;font-family:'Liberation Sans', sans-serif;transform:scaleX(0.9643);">Анимация</div>
<div id="t27" class="t" style="left:666px;top:294.14px;font-size:12px;line-height:12px;color:#fbe9e3;font-weight:400;font-family:'Liberation Sans', sans-serif;transform:scaleX(0.9274);">Слайд-шоу</div>
<div id="t28" class="t" style="left:744.5px;top:294.14px;font-size:12px;line-height:12px;color:#fbe9e3;font-weight:400;font-family:'Liberation Sans', sans-serif;transform:scaleX(0.9359);">Запись</div>
<div id="t29" class="t" style="left:802px;top:294.14px;font-size:12px;line-height:12px;color:#fbe9e3;font-weight:400;font-family:'Liberation Sans', sans-serif;transform:scaleX(0.9462);">Рецензирование</div>
<div id="t30" class="t" style="left:911.4px;top:294.14px;font-size:12px;line-height:12px;color:#fbe9e3;font-weight:400;font-family:'Liberation Sans', sans-serif;transform:scaleX(0.8773);">Вид</div>
<div id="t31" class="t" style="left:951.5px;top:294.14px;font-size:12px;line-height:12px;color:#fbe9e3;font-weight:400;font-family:'Liberation Sans', sans-serif;transform:scaleX(0.9213);">Справка</div>
<div id="t32" class="t" style="left:1044px;top:294.14px;font-size:12px;line-height:12px;color:#fbe9e3;font-weight:400;font-family:'Liberation Sans', sans-serif;transform:scaleX(0.9098);">Что вы хотите сделать?</div>
<svg class="r" style="left:1019px;top:291px;" width="14" height="18" viewBox="0 0 14 18"><path d="M7 2 Q12 2 12 7 Q12 9.5 10 11.5 V13.5 H4 V11.5 Q2 9.5 2 7 Q2 2 7 2z M4.5 15.5 H9.5" fill="none" stroke="#fbe9e3" stroke-width="1.2"/></svg>
<div class="r" style="left:1510px;top:288px;width:126px;height:23px;background:transparent;border:1.5px solid #f3b59d;box-sizing:border-box;"></div>
<svg class="r" style="left:1513px;top:292px;" width="14" height="14" viewBox="0 0 14 14"><path d="M1.5 6 V12.5 H10.5 V9 M4 9.5 Q4 5 9 5 V2.5 L12.5 6 L9 9 V7.2 Q6 7 4 9.5z" fill="none" stroke="#fbe0d6" stroke-width="1.1"/></svg>
<div id="share" class="t" style="left:1530px;top:294.05px;font-size:11.5px;line-height:11.5px;color:#fdf3ee;font-weight:700;font-family:'Liberation Sans', sans-serif;transform:scaleX(1.0783);">Общий доступ</div>
<svg class="r" style="left:1626px;top:297px;" width="8" height="6" viewBox="0 0 8 6"><path d="M1 1 L4 4 L7 1" fill="none" stroke="#fbe9e3" stroke-width="1.1"/></svg>
<svg class="r" style="left:1652px;top:295px;" width="8" height="8" viewBox="0 0 8 8"><circle cx="4" cy="4" r="2.3" fill="#f08a24"/></svg>
<div class="r" style="left:242px;top:314px;width:1436px;height:86px;background:#f3f3f3;"></div>
<svg class="r" style="left:262px;top:319px;" width="30" height="32" viewBox="0 0 30 32"><rect x="2" y="4" width="20" height="24" rx="1" fill="#ecc47a"/><rect x="7" y="1.5" width="10" height="5" rx="1.5" fill="#707070"/><circle cx="12" cy="2.5" r="1.5" fill="#707070"/><path d="M16 15.5 H23.5 L27 19 V30.5 H16z" fill="#fff" stroke="#7a7a7a" stroke-width="0.9"/></svg>
<div id="t34" class="t" style="left:252px;top:354.02px;font-size:10.8px;line-height:10.8px;color:#444444;font-weight:400;font-family:'Liberation Sans', sans-serif;transform:scaleX(0.9783);">Вставить</div>
<svg class="r" style="left:271px;top:371px;" width="8" height="5" viewBox="0 0 8 5"><path d="M1 1 L4.0 4 L7 1" fill="none" stroke="#444444" stroke-width="1"/></svg>
<svg class="r" style="left:302px;top:320px;" width="16" height="15" viewBox="0 0 16 15"><path d="M4.5 1 L10 9 M11.5 1 L6 9" stroke="#8a8a8a" stroke-width="1.1"/><circle cx="4.5" cy="11" r="2.6" fill="none" stroke="#4a78b0" stroke-width="1.3"/><circle cx="11.5" cy="11" r="2.6" fill="none" stroke="#4a78b0" stroke-width="1.3"/></svg>
<svg class="r" style="left:302px;top:341px;" width="16" height="16" viewBox="0 0 16 16"><path d="M2 1.5 H8 L10 3.5 V11 H2z" fill="#fff" stroke="#7a7a7a" stroke-width="0.9"/><path d="M6 5.5 H12 L14 7.5 V15 H6z" fill="#fff" stroke="#7a7a7a" stroke-width="0.9"/><path d="M8 9 H12 M8 11 H12 M8 13 H12" stroke="#9a9a9a" stroke-width="0.7"/></svg>
<svg class="r" style="left:328px;top:347.5px;" width="8" height="5" viewBox="0 0 8 5"><path d="M1 1 L4.0 4 L7 1" fill="none" stroke="#444444" stroke-width="1"/></svg>
<svg class="r" style="left:303px;top:363px;" width="15" height="14" viewBox="0 0 15 14"><path d="M8 6 L12.5 1.5 L14 3 L9.5 7.5z" fill="#6a6a6a"/><path d="M1 11 L6.5 5.5 L9.5 8.5 L4 14z" fill="#d8b468"/></svg>
<div class="r" style="left:350px;top:318px;width:1px;height:78px;background:#c8c8c8;"></div>
<div id="t35" class="t" style="left:254px;top:387.78px;font-size:10px;line-height:10px;color:#444444;font-weight:400;font-family:'Liberation Sans', sans-serif;transform:scaleX(0.9706);">Буфер обмена</div>
<svg class="r" style="left:338px;top:388px;" width="10" height="9" viewBox="0 0 10 9"><path d="M1 7 V1 H7 M3 3 L8 8 M8 4.5 V8 H4.5" fill="none" stroke="#7a7a7a" stroke-width="0.9"/></svg>
<svg class="r" style="left:364px;top:319px;" width="32" height="28" viewBox="0 0 32 28"><rect x="5" y="7" width="26" height="19" fill="#fff" stroke="#9a9a9a" stroke-width="1"/><rect x="9" y="11" width="18" height="4" fill="#cfcfcf"/><path d="M9 18 H27 M9 21 H27" stroke="#bdbdbd" stroke-width="0.9"/><circle cx="5" cy="5" r="2.5" fill="#f7c74a"/><path d="M5 0 V10 M0 5 H10 M1.5 1.5 L8.5 8.5 M8.5 1.5 L1.5 8.5" stroke="#f7c74a" stroke-width="0.8"/></svg>
<div id="t36" class="t" style="left:360.4px;top:353.72px;font-size:10.8px;line-height:10.8px;color:#444444;font-weight:400;font-family:'Liberation Sans', sans-serif;transform:scaleX(0.9780);">Создать</div>
<div id="t37" class="t" style="left:360.4px;top:368.72px;font-size:10.8px;line-height:10.8px;color:#444444;font-weight:400;font-family:'Liberation Sans', sans-serif;transform:scaleX(0.9867);">слайд</div>
<svg class="r" style="left:393px;top:373.5px;" width="8" height="5" viewBox="0 0 8 5"><path d="M1 1 L4.0 4 L7 1" fill="none" stroke="#444444" stroke-width="1"/></svg>
<svg class="r" style="left:405px;top:320px;" width="18" height="14" viewBox="0 0 18 14"><rect x="1" y="1" width="15" height="11.5" fill="#fff" stroke="#8a8a8a" stroke-width="0.9"/><rect x="3" y="3" width="11" height="2.5" fill="#bdbdbd"/><rect x="3" y="7" width="5" height="4" fill="#cfcfcf"/><rect x="9" y="7" width="5" height="4" fill="#cfcfcf"/></svg>
<div id="t38" class="t" style="left:424.5px;top:322.72px;font-size:10.8px;line-height:10.8px;color:#444444;font-weight:400;font-family:'Liberation Sans', sans-serif;transform:scaleX(1.0161);">Макет</div>
<svg class="r" style="left:459px;top:325.5px;" width="8" height="5" viewBox="0 0 8 5"><path d="M1 1 L4.0 4 L7 1" fill="none" stroke="#444444" stroke-width="1"/></svg>
<svg class="r" style="left:405px;top:341px;" width="18" height="15" viewBox="0 0 18 15"><rect x="4" y="3" width="13" height="11" fill="#fff" stroke="#8a8a8a" stroke-width="0.9"/><rect x="6" y="6" width="9" height="6" fill="#cfcfcf"/><path d="M1.5 6 Q2 1.5 7 2 L5.5 0.5 M7 2 L5.5 3.8" fill="none" stroke="#3e76b8" stroke-width="1.3"/></svg>
<div id="t39" class="t" style="left:424.5px;top:344.12px;font-size:10.8px;line-height:10.8px;color:#444444;font-weight:400;font-family:'Liberation Sans', sans-serif;transform:scaleX(1.0203);">Восстановить</div>
<svg class="r" style="left:405px;top:362px;" width="18" height="16" viewBox="0 0 18 16"><rect x="5" y="3" width="12" height="5" fill="#fff" stroke="#8a8a8a" stroke-width="0.9"/><rect x="5" y="9" width="12" height="6" fill="#fff" stroke="#8a8a8a" stroke-width="0.9"/><path d="M1 3 H4 M2.5 1.5 V4.5" stroke="#f2b84a" stroke-width="1.2"/></svg>
<div id="t40" class="t" style="left:424.5px;top:365.92px;font-size:10.8px;line-height:10.8px;color:#444444;font-weight:400;font-family:'Liberation Sans', sans-serif;transform:scaleX(0.9778);">Раздел</div>
<svg class="r" style="left:463.5px;top:369px;" width="8" height="5" viewBox="0 0 8 5"><path d="M1 1 L4.0 4 L7 1" fill="none" stroke="#444444" stroke-width="1"/></svg>
<div id="t41" class="t" style="left:412.5px;top:387.78px;font-size:10px;line-height:10px;color:#444444;font-weight:400;font-family:'Liberation Sans', sans-serif;transform:scaleX(0.9135);">Слайды</div>
<div class="r" style="left:509.6px;top:318px;width:1px;height:78px;background:#c8c8c8;"></div>
<div class="r" style="left:518px;top:324px;width:107px;height:22px;background:#e4e4e4;border:1px solid #d2d2d2;box-sizing:border-box;"></div>
<div class="r" style="left:612px;top:325px;width:1px;height:20px;background:#d2d2d2;"></div>
<svg class="r" style="left:615px;top:334px;" width="7" height="5" viewBox="0 0 7 5"><path d="M1 1 L3.5 4 L6 1" fill="none" stroke="#c4c4c4" stroke-width="1"/></svg>
<div class="r" style="left:626px;top:324px;width:44px;height:22px;background:#e4e4e4;border:1px solid #d2d2d2;box-sizing:border-box;"></div>
<div class="r" style="left:657.5px;top:325px;width:1px;height:20px;background:#d2d2d2;"></div>
<svg class="r" style="left:660px;top:334px;" width="7" height="5" viewBox="0 0 7 5"><path d="M1 1 L3.5 4 L6 1" fill="none" stroke="#c4c4c4" stroke-width="1"/></svg>
<div id="t42" class="t" style="left:677.5px;top:329.11px;font-size:13px;line-height:13px;color:#b3b3b3;font-weight:400;font-family:'Liberation Sans', sans-serif;">A</div>
<svg class="r" style="left:684px;top:326px;" width="6" height="4" viewBox="0 0 6 4"><path d="M1 3 L3 1 L5 3" fill="#b3b3b3"/></svg>
<div id="t43" class="t" style="left:699px;top:329.11px;font-size:13px;line-height:13px;color:#b3b3b3;font-weight:400;font-family:'Liberation Sans', sans-serif;">A</div>
<svg class="r" style="left:706px;top:326px;" width="6" height="4" viewBox="0 0 6 4"><path d="M1 1 L3 3 L5 1" fill="#b3b3b3"/></svg>
<div class="r" style="left:718px;top:325px;width:1px;height:20px;background:#d6d6d6;"></div>
<svg class="r" style="left:725px;top:327px;" width="16" height="14" viewBox="0 0 16 14"><text x="1" y="9" font-size="10" fill="#b3b3b3" font-family="Liberation Sans">A</text><path d="M7 11 L12 5 L15 8 L10 13z" fill="#c8c8c8"/></svg>
<div id="t44" class="t" style="left:522.4px;top:358.12px;font-size:12.5px;line-height:12.5px;color:#b3b3b3;font-weight:700;font-family:'Liberation Sans', sans-serif;transform:scaleX(1.1273);">Ж</div>
<div id="t45" class="t" style="left:546px;top:358.12px;font-size:12.5px;line-height:12.5px;color:#b3b3b3;font-weight:700;font-family:'Liberation Sans', sans-serif;transform:scaleX(1.1250);font-style:italic;">К</div>
<div id="t46" class="t" style="left:569.3px;top:358.12px;font-size:12.5px;line-height:12.5px;color:#b3b3b3;font-weight:400;font-family:'Liberation Sans', sans-serif;transform:scaleX(1.0625);">Ч</div>
<div class="r" style="left:569px;top:369.5px;width:9px;height:1px;background:#b3b3b3;"></div>
<div id="t47" class="t" style="left:592px;top:358.12px;font-size:12.5px;line-height:12.5px;color:#b3b3b3;font-weight:700;font-family:'Liberation Sans', sans-serif;text-shadow:1px 1px 1px #ddd;">S</div>
<div id="t48" class="t" style="left:611px;top:361.00px;font-size:9px;line-height:9px;color:#b3b3b3;font-weight:400;font-family:'Liberation Sans', sans-serif;transform:scaleX(0.9800);">abc</div>
<div class="r" style="left:611px;top:364.5px;width:15px;height:1px;background:#b3b3b3;"></div>
<div id="t49" class="t" style="left:634.5px;top:354.96px;font-size:11px;line-height:11px;color:#b3b3b3;font-weight:400;font-family:'Liberation Sans', sans-serif;transform:scaleX(0.8929);">AV</div>
<svg class="r" style="left:634px;top:366px;" width="14" height="5" viewBox="0 0 14 5"><path d="M1 2.5 H13 M3 1 L1 2.5 L3 4 M11 1 L13 2.5 L11 4" fill="none" stroke="#b3b3b3" stroke-width="0.9"/></svg>
<svg class="r" style="left:652px;top:363px;" width="7" height="5" viewBox="0 0 7 5"><path d="M1 1 L3.5 4 L6 1" fill="none" stroke="#b3b3b3" stroke-width="1"/></svg>
<div id="t50" class="t" style="left:670.3px;top:358.54px;font-size:12px;line-height:12px;color:#b3b3b3;font-weight:400;font-family:'Liberation Sans', sans-serif;transform:scaleX(0.8733);">Aa</div>
<svg class="r" style="left:687.5px;top:363px;" width="7" height="5" viewBox="0 0 7 5"><path d="M1 1 L3.5 4 L6 1" fill="none" stroke="#b3b3b3" stroke-width="1"/></svg>
<div class="r" style="left:703.6px;top:355px;width:1px;height:19px;background:#d6d6d6;"></div>
<div id="t51" class="t" style="left:712.7px;top:356.23px;font-size:12.5px;line-height:12.5px;color:#b3b3b3;font-weight:400;font-family:'Liberation Sans', sans-serif;transform:scaleX(1.1375);">A</div>
<svg class="r" style="left:731px;top:363px;" width="7" height="5" viewBox="0 0 7 5"><path d="M1 1 L3.5 4 L6 1" fill="none" stroke="#b3b3b3" stroke-width="1"/></svg>
<div id="t52" class="t" style="left:605.8px;top:387.78px;font-size:10px;line-height:10px;color:#444444;font-weight:400;font-family:'Liberation Sans', sans-serif;transform:scaleX(0.9273);">Шрифт</div>
<svg class="r" style="left:737px;top:388px;" width="10" height="9" viewBox="0 0 10 9"><path d="M1 7 V1 H7 M3 3 L8 8 M8 4.5 V8 H4.5" fill="none" stroke="#b0b0b0" stroke-width="0.9"/></svg>
<div class="r" style="left:749.6px;top:318px;width:1px;height:78px;background:#c8c8c8;"></div>
<svg class="r" style="left:760px;top:326px;" width="16" height="16" viewBox="0 0 16 16"><circle cx="2.5" cy="3" r="1.2" fill="#bdbdbd"/><circle cx="2.5" cy="8" r="1.2" fill="#bdbdbd"/><circle cx="2.5" cy="13" r="1.2" fill="#bdbdbd"/><path d="M5.5 3 H14 M5.5 8 H14 M5.5 13 H14" stroke="#bdbdbd" stroke-width="1.1" fill="none"/></svg>
<svg class="r" style="left:781px;top:333px;" width="7" height="5" viewBox="0 0 7 5"><path d="M1 1 L3.5 4 L6 1" fill="none" stroke="#bdbdbd" stroke-width="1"/></svg>
<svg class="r" style="left:796px;top:326px;" width="16" height="16" viewBox="0 0 16 16"><path d="M2 1.5 V4.5 M1.5 7 H3 L1.5 9.5 H3 M1.5 12 H3 L2 13.5 L3 15" stroke="#bdbdbd" stroke-width="1.1" fill="none" stroke-width="0.8"/><path d="M5.5 3 H14 M5.5 8 H14 M5.5 13 H14" stroke="#bdbdbd" stroke-width="1.1" fill="none"/></svg>
<svg class="r" style="left:818px;top:333px;" width="7" height="5" viewBox="0 0 7 5"><path d="M1 1 L3.5 4 L6 1" fill="none" stroke="#bdbdbd" stroke-width="1"/></svg>
<svg class="r" style="left:834px;top:326px;" width="16" height="16" viewBox="0 0 16 16"><path d="M1 1.5 H15 M7 5 H15 M7 8 H15 M7 11 H15 M1 14.5 H15" stroke="#bdbdbd" stroke-width="1.1" fill="none"/><path d="M5 5 L1.5 8 L5 11" stroke="#bdbdbd" stroke-width="1.1" fill="none" stroke-width="1.4"/></svg>
<svg class="r" style="left:856px;top:326px;" width="16" height="16" viewBox="0 0 16 16"><path d="M1 1.5 H15 M7 5 H15 M7 8 H15 M7 11 H15 M1 14.5 H15" stroke="#bdbdbd" stroke-width="1.1" fill="none"/><path d="M1.5 5 L5 8 L1.5 11" stroke="#bdbdbd" stroke-width="1.1" fill="none" stroke-width="1.4"/></svg>
<svg class="r" style="left:880px;top:326px;" width="15" height="16" viewBox="0 0 15 16"><path d="M3 1 V15 M1 3 L3 1 L5 3 M1 13 L3 15 L5 13 M7 3 H14 M7 6.5 H14 M7 10 H14 M7 13.5 H14" stroke="#bdbdbd" stroke-width="1.1" fill="none"/></svg>
<svg class="r" style="left:899px;top:333px;" width="7" height="5" viewBox="0 0 7 5"><path d="M1 1 L3.5 4 L6 1" fill="none" stroke="#bdbdbd" stroke-width="1"/></svg>
<svg class="r" style="left:913px;top:319px;" width="17" height="16" viewBox="0 0 17 16"><path d="M2 2 V14 M5 2 V14 M9 14 V9 M12 14 V9" stroke="#bdbdbd" stroke-width="1.1" fill="none"/><text x="8" y="9" font-size="9" fill="#bdbdbd" font-family="Liberation Sans">A</text></svg>
<svg class="r" style="left:933.5px;top:326px;" width="7" height="5" viewBox="0 0 7 5"><path d="M1 1 L3.5 4 L6 1" fill="none" stroke="#bdbdbd" stroke-width="1"/></svg>
<svg class="r" style="left:913px;top:341px;" width="17" height="15" viewBox="0 0 17 15"><path d="M1 1 V14 M16 1 V14 M1 1 H3 M1 14 H3 M14 1 H16 M14 14 H16 M4 7.5 H13 M8.5 2 V6 M7 3.5 L8.5 2 L10 3.5 M8.5 9 V13 M7 11.5 L8.5 13 L10 11.5" stroke="#bdbdbd" stroke-width="1.1" fill="none"/></svg>
<svg class="r" style="left:933.5px;top:347px;" width="7" height="5" viewBox="0 0 7 5"><path d="M1 1 L3.5 4 L6 1" fill="none" stroke="#bdbdbd" stroke-width="1"/></svg>
<svg class="r" style="left:913px;top:363px;" width="17" height="15" viewBox="0 0 17 15"><path d="M1 1 L6 1 L3.5 4 L6 7 H1" stroke="#bdbdbd" stroke-width="1.1" fill="none"/><rect x="6" y="6" width="10" height="8" stroke="#bdbdbd" stroke-width="1.1" fill="none"/><path d="M6 10 H16 M11 6 V14" stroke="#bdbdbd" stroke-width="1.1" fill="none"/></svg>
<svg class="r" style="left:933.5px;top:369px;" width="7" height="5" viewBox="0 0 7 5"><path d="M1 1 L3.5 4 L6 1" fill="none" stroke="#bdbdbd" stroke-width="1"/></svg>
<svg class="r" style="left:761px;top:357px;" width="14" height="12" viewBox="0 0 14 12"><path d="M1 2 H12 M1 5 H9 M1 8 H12 M1 11 H9" stroke="#bdbdbd" stroke-width="1.1" fill="none"/></svg>
<svg class="r" style="left:783px;top:357px;" width="14" height="12" viewBox="0 0 14 12"><path d="M1 2 H13 M3 5 H11 M1 8 H13 M3 11 H11" stroke="#bdbdbd" stroke-width="1.1" fill="none"/></svg>
<svg class="r" style="left:806px;top:357px;" width="14" height="12" viewBox="0 0 14 12"><path d="M1 2 H12 M4 5 H12 M1 8 H12 M4 11 H12" stroke="#bdbdbd" stroke-width="1.1" fill="none"/></svg>
<svg class="r" style="left:827px;top:357px;" width="15" height="12" viewBox="0 0 15 12"><path d="M1 1.5 H14 M1 4.5 H14 M1 7.5 H14 M1 10.5 H14" stroke="#bdbdbd" stroke-width="1.1" fill="none"/></svg>
<div class="r" style="left:849px;top:353px;width:1px;height:21px;background:#d6d6d6;"></div>
<svg class="r" style="left:855px;top:357px;" width="15" height="12" viewBox="0 0 15 12"><path d="M1 1.5 H6 M1 4.5 H6 M1 7.5 H6 M1 10.5 H6 M8 1.5 H14 M8 4.5 H14 M8 7.5 H14 M8 10.5 H14" stroke="#bdbdbd" stroke-width="1.1" fill="none"/></svg>
<svg class="r" style="left:874px;top:362px;" width="7" height="5" viewBox="0 0 7 5"><path d="M1 1 L3.5 4 L6 1" fill="none" stroke="#bdbdbd" stroke-width="1"/></svg>
<div id="t53" class="t" style="left:828.8px;top:387.78px;font-size:10px;line-height:10px;color:#444444;font-weight:400;font-family:'Liberation Sans', sans-serif;transform:scaleX(0.9786);">Абзац</div>
<svg class="r" style="left:941px;top:388px;" width="10" height="9" viewBox="0 0 10 9"><path d="M1 7 V1 H7 M3 3 L8 8 M8 4.5 V8 H4.5" fill="none" stroke="#b0b0b0" stroke-width="0.9"/></svg>
<div class="r" style="left:952.7px;top:318px;width:1px;height:78px;background:#c8c8c8;"></div>
<div class="r" style="left:961.5px;top:319.3px;width:110px;height:58.5px;background:#ffffff;border:1px solid #d0d0d0;box-sizing:border-box;"></div>
<div class="r" style="left:1071.5px;top:319.3px;width:22px;height:58.5px;background:#f3f3f3;border:1px solid #b8b8b8;box-sizing:border-box;"></div>
<svg class="r" style="left:1078px;top:344px;" width="9" height="8" viewBox="0 0 9 8"><path d="M1 1 H8 M1.5 3.5 L4.5 6.5 L7.5 3.5z" fill="#555" stroke="#555" stroke-width="0.8"/></svg>
<svg class="r" style="left:962px;top:320px;" width="110" height="57" viewBox="0 0 110 57"><rect x="2.5" y="5" width="14" height="11" stroke="#6b6b6b" stroke-width="0.9" fill="none"/><path d="M9 8 H15 M9 10.5 H15 M4 13 H15" stroke="#6b6b6b" stroke-width="0.9" fill="none"/><text x="4" y="11" font-size="6" fill="#3b5a8a" font-family="Liberation Sans">A</text>
<path d="M22 5.5 L34.5 16" stroke="#6b6b6b" stroke-width="0.9" fill="none"/><path d="M40 5.5 L52.5 16 M52.5 12 V16 H48.5" stroke="#6b6b6b" stroke-width="0.9" fill="none"/>
<rect x="57" y="6" width="14" height="10" stroke="#6b6b6b" stroke-width="0.9" fill="none"/><ellipse cx="81.8" cy="11" rx="6.8" ry="5" stroke="#6b6b6b" stroke-width="0.9" fill="none"/><rect x="93" y="6" width="13.7" height="10" rx="2.5" stroke="#6b6b6b" stroke-width="0.9" fill="none"/>
<path d="M2 36 L8.5 24 L15 36z" stroke="#6b6b6b" stroke-width="0.9" fill="none"/><path d="M21 24 H28 V35 H35" stroke="#6b6b6b" stroke-width="0.9" fill="none"/><path d="M39 24 H46 V35 H53 M50.5 33 L53 35 L50.5 37" stroke="#6b6b6b" stroke-width="0.9" fill="none"/>
<path d="M57 26.5 H64 V23.5 L70 29.5 L64 35.5 V32.5 H57z" stroke="#6b6b6b" stroke-width="0.9" fill="none"/><path d="M78.5 23 H84.5 V30 H88 L81.5 36 L75 30 H78.5z" stroke="#6b6b6b" stroke-width="0.9" fill="none"/>
<path d="M94 36 V26 Q94 23 97 23 H101 Q106 23 106 29 Q106 33 102 33 Q102 36 99 36z" stroke="#6b6b6b" stroke-width="0.9" fill="none"/>
<path d="M6 41 Q2 44 6 46 Q10 48 6 50 Q3 52 8 53 L9 54" stroke="#6b6b6b" stroke-width="0.9" fill="none"/><path d="M22 42 Q33 42 34.5 53" stroke="#6b6b6b" stroke-width="0.9" fill="none"/><path d="M40 53 Q44 40 47 43 Q50 54 53 53" stroke="#6b6b6b" stroke-width="0.9" fill="none"/>
<path d="M77.5 41 Q75 41 75 44 V46 Q75 47.5 73 47.5 Q75 47.5 75 49 V51 Q75 54 77.5 54" stroke="#6b6b6b" stroke-width="0.9" fill="none"/><path d="M88 41 Q90.5 41 90.5 44 V46 Q90.5 47.5 92.5 47.5 Q90.5 47.5 90.5 49 V51 Q90.5 54 88 54" stroke="#6b6b6b" stroke-width="0.9" fill="none"/>
<path d="M100 41 L101.8 45.5 L106.5 45.6 L102.8 48.4 L104.1 53 L100 50.3 L95.9 53 L97.2 48.4 L93.5 45.6 L98.2 45.5z" stroke="#6b6b6b" stroke-width="0.9" fill="none"/></svg>
<svg class="r" style="left:1118px;top:319px;" width="30" height="30" viewBox="0 0 30 30"><rect x="10" y="7" width="8" height="8" fill="#ebc874"/><rect x="6" y="14" width="8" height="7" fill="#ebc874"/><rect x="2" y="2" width="11" height="11" fill="#fff" stroke="#7a7a7a" stroke-width="0.9"/><rect x="14.5" y="15.5" width="12" height="12" fill="#fff" stroke="#7a7a7a" stroke-width="0.9"/></svg>
<div id="t54" class="t" style="left:1099px;top:354.12px;font-size:10.8px;line-height:10.8px;color:#444444;font-weight:400;font-family:'Liberation Sans', sans-serif;transform:scaleX(1.0656);">Упорядочить</div>
<svg class="r" style="left:1130px;top:371px;" width="8" height="5" viewBox="0 0 8 5"><path d="M1 1 L4.0 4 L7 1" fill="none" stroke="#444444" stroke-width="1"/></svg>
<svg class="r" style="left:1183px;top:321px;" width="32" height="30" viewBox="0 0 32 30"><rect x="2" y="2" width="25" height="25" rx="4" fill="none" stroke="#d0d0d0" stroke-width="1.2"/><path d="M12 27 L26 13 L30 9 L28 17 L16 28z" fill="#c4c4c4"/></svg>
<div id="t55" class="t" style="left:1172.2px;top:354.12px;font-size:10.8px;line-height:10.8px;color:#b3b3b3;font-weight:400;font-family:'Liberation Sans', sans-serif;transform:scaleX(1.0160);">Экспресс-</div>
<div id="t56" class="t" style="left:1178.6px;top:369.12px;font-size:10.8px;line-height:10.8px;color:#b3b3b3;font-weight:400;font-family:'Liberation Sans', sans-serif;transform:scaleX(0.9897);">стили</div>
<svg class="r" style="left:1210px;top:374px;" width="7" height="5" viewBox="0 0 7 5"><path d="M1 1 L3.5 4 L6 1" fill="none" stroke="#b3b3b3" stroke-width="1"/></svg>
<svg class="r" style="left:1231px;top:320px;" width="14" height="14" viewBox="0 0 14 14"><path d="M2 7 L7 2 L12 7 L7 12z" fill="none" stroke="#bdbdbd" stroke-width="1"/><path d="M10 9 Q12 12 11 13" stroke="#bdbdbd"/></svg>
<div id="t57" class="t" style="left:1247px;top:322.62px;font-size:10.8px;line-height:10.8px;color:#b3b3b3;font-weight:400;font-family:'Liberation Sans', sans-serif;transform:scaleX(1.0122);">Заливка фигуры</div>
<svg class="r" style="left:1333.5px;top:325.5px;" width="7" height="5" viewBox="0 0 7 5"><path d="M1 1 L3.5 4 L6 1" fill="none" stroke="#b3b3b3" stroke-width="1"/></svg>
<svg class="r" style="left:1231px;top:342px;" width="14" height="14" viewBox="0 0 14 14"><rect x="1" y="3" width="10" height="10" fill="none" stroke="#bdbdbd" stroke-width="1"/><path d="M7 9 L13 2" stroke="#bdbdbd" stroke-width="1.2"/></svg>
<div id="t58" class="t" style="left:1247px;top:344.32px;font-size:10.8px;line-height:10.8px;color:#b3b3b3;font-weight:400;font-family:'Liberation Sans', sans-serif;transform:scaleX(1.0263);">Контур фигуры</div>
<svg class="r" style="left:1328.5px;top:347px;" width="7" height="5" viewBox="0 0 7 5"><path d="M1 1 L3.5 4 L6 1" fill="none" stroke="#b3b3b3" stroke-width="1"/></svg>
<svg class="r" style="left:1231px;top:364px;" width="14" height="14" viewBox="0 0 14 14"><rect x="1" y="2" width="11" height="10" rx="3" fill="#bdbdbd" opacity="0.6"/></svg>
<div id="t59" class="t" style="left:1247px;top:366.12px;font-size:10.8px;line-height:10.8px;color:#b3b3b3;font-weight:400;font-family:'Liberation Sans', sans-serif;transform:scaleX(0.9667);">Эффекты фигуры</div>
<svg class="r" style="left:1337px;top:369px;" width="7" height="5" viewBox="0 0 7 5"><path d="M1 1 L3.5 4 L6 1" fill="none" stroke="#b3b3b3" stroke-width="1"/></svg>
<div id="t60" class="t" style="left:1124.9px;top:387.78px;font-size:10px;line-height:10px;color:#444444;font-weight:400;font-family:'Liberation Sans', sans-serif;transform:scaleX(0.9180);">Рисование</div>
<svg class="r" style="left:1348.5px;top:388px;" width="10" height="9" viewBox="0 0 10 9"><path d="M1 7 V1 H7 M3 3 L8 8 M8 4.5 V8 H4.5" fill="none" stroke="#b0b0b0" stroke-width="0.9"/></svg>
<div class="r" style="left:1359.7px;top:318px;width:1px;height:78px;background:#c8c8c8;"></div>
<svg class="r" style="left:1371px;top:320px;" width="15" height="15" viewBox="0 0 15 15"><circle cx="9" cy="6" r="4.6" fill="none" stroke="#2f5e9a" stroke-width="1.4"/><path d="M5.5 9.5 L1.5 13.5" stroke="#2f5e9a" stroke-width="1.6"/></svg>
<div id="t61" class="t" style="left:1388.6px;top:322.62px;font-size:10.8px;line-height:10.8px;color:#444444;font-weight:400;font-family:'Liberation Sans', sans-serif;transform:scaleX(1.0129);">Найти</div>
<svg class="r" style="left:1370px;top:342px;" width="17" height="16" viewBox="0 0 17 16"><text x="1" y="7" font-size="7" fill="#5a4a8a" font-family="Liberation Sans">ab</text><text x="6" y="14.5" font-size="7" fill="#5a4a8a" font-family="Liberation Sans">ac</text><path d="M2 9 V12 H5" stroke="#2f5e9a" fill="none" stroke-width="0.9"/></svg>
<div id="t62" class="t" style="left:1388.6px;top:344.32px;font-size:10.8px;line-height:10.8px;color:#444444;font-weight:400;font-family:'Liberation Sans', sans-serif;transform:scaleX(1.0082);">Заменить</div>
<svg class="r" style="left:1453px;top:347px;" width="8" height="5" viewBox="0 0 8 5"><path d="M1 1 L4.0 4 L7 1" fill="none" stroke="#444444" stroke-width="1"/></svg>
<svg class="r" style="left:1372px;top:362px;" width="12" height="16" viewBox="0 0 12 16"><path d="M2 1.5 V13 L4.8 10.5 L7 15 L8.8 14.2 L6.8 10 H10.5z" fill="#fff" stroke="#555" stroke-width="0.9"/></svg>
<div id="t63" class="t" style="left:1388.6px;top:366.12px;font-size:10.8px;line-height:10.8px;color:#444444;font-weight:400;font-family:'Liberation Sans', sans-serif;transform:scaleX(0.9880);">Выделить</div>
<svg class="r" style="left:1440.5px;top:369px;" width="8" height="5" viewBox="0 0 8 5"><path d="M1 1 L4.0 4 L7 1" fill="none" stroke="#444444" stroke-width="1"/></svg>
<div id="t64" class="t" style="left:1380px;top:387.78px;font-size:10px;line-height:10px;color:#444444;font-weight:400;font-family:'Liberation Sans', sans-serif;transform:scaleX(0.9605);">Редактирование</div>
<div class="r" style="left:1476px;top:318px;width:1px;height:78px;background:#c8c8c8;"></div>
<svg class="r" style="left:1508px;top:327px;" width="14" height="14" viewBox="0 0 14 14"><circle cx="7" cy="6.5" r="4.8" fill="#f39a1e" opacity="0.9"/></svg>
<div id="t65" class="t" style="left:1485.6px;top:354.12px;font-size:10.8px;line-height:10.8px;color:#444444;font-weight:400;font-family:'Liberation Sans', sans-serif;transform:scaleX(1.0492);">Надстройки</div>
<div id="t66" class="t" style="left:1489px;top:387.78px;font-size:10px;line-height:10px;color:#444444;font-weight:400;font-family:'Liberation Sans', sans-serif;transform:scaleX(0.9636);">Надстройки</div>
<div class="r" style="left:1557px;top:318px;width:1px;height:78px;background:#c8c8c8;"></div>
<svg class="r" style="left:1660px;top:389px;" width="11" height="8" viewBox="0 0 11 8"><path d="M1 6.5 L5.5 2 L10 6.5" fill="none" stroke="#444" stroke-width="1.1"/></svg>
<div class="r" style="left:242px;top:400px;width:1436px;height:593px;background:#e6e6e7;"></div>
<div class="r" style="left:242px;top:400px;width:1436px;height:1px;background:#d9d9d9;"></div>
<div class="r" style="left:242px;top:401px;width:168px;height:592px;background:#e3e3e3;"></div>
<div class="r" style="left:410px;top:401px;width:1px;height:592px;background:#d0d0d0;"></div>
<div class="r" style="left:394px;top:402px;width:14px;height:591px;background:#f1f1f1;"></div>
<div class="r" style="left:394px;top:402px;width:14px;height:405px;background:#ffffff;border:1px solid #c4c4c4;box-sizing:border-box;"></div>
<div class="r" style="left:394px;top:415px;width:14px;height:1.5px;background:#c4c4c4;"></div>
<svg class="r" style="left:396px;top:405px;" width="10" height="7" viewBox="0 0 10 7"><path d="M1.5 5.5 L5 2 L8.5 5.5z" fill="#222"/></svg>
<div class="r" style="left:394px;top:980px;width:14px;height:14px;background:#ffffff;border:1px solid #c4c4c4;box-sizing:border-box;"></div>
<svg class="r" style="left:396px;top:984px;" width="10" height="7" viewBox="0 0 10 7"><path d="M1.5 1.5 L5 5 L8.5 1.5z" fill="#222"/></svg>
<div class="r" style="left:272.5px;top:416px;width:105px;height:61.5px;background:#7b1418;"></div>
<svg class="r" style="left:275.5px;top:419px;" width="99" height="55.5" viewBox="0 0 99 55.5"><rect width="99" height="55.5" fill="#fff"/>
<polygon points="53.19548133595285,0 99,0 99,55.5 64.67092337917485,55.5" fill="#0b3c6e"/>
<polygon points="89.76129666011788,38.121807465618865 97.83300589390963,38.121807465618865 90.83104125736739,55.5 82.75933202357564,55.5" fill="#0a5f96"/>
<polygon points="83.82907662082515,42.887033398821224 91.9007858546169,42.887033398821224 86.74656188605108,55.5 78.67485265225933,55.5" fill="#29abe2"/>
<polygon points="77.79960707269156,47.555009823182715 85.87131630648331,47.555009823182715 82.66208251473478,55.5 74.59037328094303,55.5" fill="#fff"/>
<rect x="71.67288801571709" y="3.306483300589391" width="6.807465618860511" height="8.946954813359529" fill="#fff" opacity="0.75"/><rect x="79.25834970530452" y="5.834970530451867" width="14.587426326129666" height="5.834970530451867" fill="#fff" opacity="0.45"/>
<path d="M4.667976424361493 4.667976424361493 H24.312377210216113 M4.667976424361493 6.612966601178782 H24.798624754420434 M4.667976424361493 8.557956777996072 H22.367387033398824" stroke="#777" stroke-width="0.6" opacity="0.7"/>
<path d="M4.667976424361493 21.20039292730845 H41.622789783889985 M4.667976424361493 24.70137524557957 H51.93123772102162 M4.667976424361493 28.20235756385069 H39.386051080550104" stroke="#222" stroke-width="2.2" opacity="0.85"/>
<rect x="4.4734774066797645" y="33.551080550098234" width="49.59724950884087" height="1" fill="#777"/>
<path d="M4.4734774066797645 37.052062868369354 H35.0098231827112 M4.4734774066797645 39.288801571709236 H50.56974459724951 M4.4734774066797645 41.42829076620826 H30.43909626719057" stroke="#444" stroke-width="0.7" opacity="0.75"/></svg>
<div id="t67" class="t" style="left:254.6px;top:416.84px;font-size:12px;line-height:12px;color:#c43e1c;font-weight:400;font-family:'Liberation Sans', sans-serif;transform:scaleX(0.7714);">1</div>
<div class="r" style="left:275.0px;top:494.0px;width:100px;height:56.5px;background:#d0d0d0;"></div><svg class="r" style="left:275.5px;top:494.5px;" width="99" height="55.5" viewBox="0 0 99 55.5"><rect width="99" height="55.5" fill="#fff"/><path d="M3 52.5 L8 47.5 V52.5z" fill="#0b3c6e"/><rect x="9" y="51.9" width="78" height="0.9" fill="#7da4c4"/><rect x="8" y="21" width="84" height="1" fill="#888"/><rect x="8" y="25.2" width="84" height="1" fill="#999"/><rect x="8" y="29.4" width="84" height="1" fill="#999"/><rect x="8" y="33.5" width="60" height="1" fill="#999"/><rect x="22" y="20" width="14" height="2" fill="#333"/></svg>
<div id="t68" class="t" style="left:254px;top:493.14px;font-size:12px;line-height:12px;color:#444444;font-weight:400;font-family:'Liberation Sans', sans-serif;transform:scaleX(0.9286);">2</div>
<div class="r" style="left:275.0px;top:569.6px;width:100px;height:56.5px;background:#d0d0d0;"></div><svg class="r" style="left:275.5px;top:570.1px;" width="99" height="55.5" viewBox="0 0 99 55.5"><rect width="99" height="55.5" fill="#fff"/><path d="M3 52.5 L8 47.5 V52.5z" fill="#0b3c6e"/><rect x="9" y="51.9" width="78" height="0.9" fill="#7da4c4"/><rect x="28" y="5" width="44" height="1.5" fill="#aaa"/><rect x="36" y="9" width="28" height="1.5" fill="#aaa"/><rect x="18" y="14" width="12" height="6" fill="#bcd6f0"/><rect x="68" y="14" width="12" height="6" fill="#bcd6f0"/><path d="M30 17 L42 28 M68 17 L57 28" stroke="#666" stroke-width="0.4"/><rect x="18" y="25" width="12" height="6" fill="#bcd6f0"/><rect x="68" y="25" width="12" height="6" fill="#bcd6f0"/><path d="M30 28 L42 28 M68 28 L57 28" stroke="#666" stroke-width="0.4"/><rect x="18" y="36" width="12" height="6" fill="#bcd6f0"/><rect x="68" y="36" width="12" height="6" fill="#bcd6f0"/><path d="M30 39 L42 28 M68 39 L57 28" stroke="#666" stroke-width="0.4"/><rect x="42" y="24" width="15" height="8" rx="2" fill="#b8bcc4"/></svg>
<div id="t69" class="t" style="left:254px;top:568.74px;font-size:12px;line-height:12px;color:#444444;font-weight:400;font-family:'Liberation Sans', sans-serif;transform:scaleX(0.9286);">3</div>
<div class="r" style="left:275.0px;top:645.2px;width:100px;height:56.5px;background:#d0d0d0;"></div><svg class="r" style="left:275.5px;top:645.7px;" width="99" height="55.5" viewBox="0 0 99 55.5"><rect width="99" height="55.5" fill="#fff"/><path d="M3 52.5 L8 47.5 V52.5z" fill="#0b3c6e"/><rect x="9" y="51.9" width="78" height="0.9" fill="#7da4c4"/><rect x="24" y="7" width="52" height="1.5" fill="#aaa"/><rect x="38" y="11" width="22" height="1.5" fill="#aaa"/><circle cx="15.5" cy="26" r="1.8" fill="#ccc"/><rect x="7.0" y="31" width="16.5" height="9" fill="#d6d9de"/><circle cx="38.6" cy="26" r="1.8" fill="#ccc"/><rect x="30.1" y="31" width="16.5" height="9" fill="#d6d9de"/><circle cx="61" cy="26" r="1.8" fill="#ccc"/><rect x="52.5" y="31" width="16.5" height="9" fill="#d6d9de"/><circle cx="84" cy="26" r="1.8" fill="#ccc"/><rect x="75.5" y="31" width="16.5" height="9" fill="#d6d9de"/></svg>
<div id="t70" class="t" style="left:254px;top:644.34px;font-size:12px;line-height:12px;color:#444444;font-weight:400;font-family:'Liberation Sans', sans-serif;transform:scaleX(0.9286);">4</div>
<div class="r" style="left:275.0px;top:720.8px;width:100px;height:56.5px;background:#d0d0d0;"></div><svg class="r" style="left:275.5px;top:721.3px;" width="99" height="55.5" viewBox="0 0 99 55.5"><rect width="99" height="55.5" fill="#fff"/><path d="M3 52.5 L8 47.5 V52.5z" fill="#0b3c6e"/><rect x="9" y="51.9" width="78" height="0.9" fill="#7da4c4"/><rect x="30" y="6" width="40" height="1.5" fill="#aaa"/><polygon points="14,25 20,20 26,23 26,31 20,34 14,31" fill="#1f63b0"/><rect x="26" y="25" width="8" height="5" fill="#8899aa" opacity="0.5"/><rect x="64" y="21" width="20" height="12" fill="none" stroke="#c06090" stroke-width="0.8"/><rect x="66" y="25" width="16" height="4" fill="#b0306a"/></svg>
<div id="t71" class="t" style="left:254px;top:719.94px;font-size:12px;line-height:12px;color:#444444;font-weight:400;font-family:'Liberation Sans', sans-serif;transform:scaleX(0.9286);">5</div>
<div class="r" style="left:275.0px;top:796.4px;width:100px;height:56.5px;background:#d0d0d0;"></div><svg class="r" style="left:275.5px;top:796.9px;" width="99" height="55.5" viewBox="0 0 99 55.5"><rect width="99" height="55.5" fill="#fff"/><path d="M3 52.5 L8 47.5 V52.5z" fill="#0b3c6e"/><rect x="9" y="51.9" width="78" height="0.9" fill="#7da4c4"/><rect x="5" y="24" width="50" height="1.5" fill="#bbb"/><rect x="14" y="29" width="34" height="1.5" fill="#bbb"/><rect x="58" y="12" width="38" height="34" fill="none" stroke="#999" stroke-width="0.5"/><path d="M60 18 H94 M60 24 H94 M60 30 H94 M77 12 V46" stroke="#bbb" stroke-width="0.5"/></svg>
<div id="t72" class="t" style="left:254px;top:795.54px;font-size:12px;line-height:12px;color:#444444;font-weight:400;font-family:'Liberation Sans', sans-serif;transform:scaleX(0.9286);">6</div>
<div class="r" style="left:275.0px;top:872.0px;width:100px;height:56.5px;background:#d0d0d0;"></div><svg class="r" style="left:275.5px;top:872.5px;" width="99" height="55.5" viewBox="0 0 99 55.5"><rect width="99" height="55.5" fill="#fff"/><path d="M3 52.5 L8 47.5 V52.5z" fill="#0b3c6e"/><rect x="9" y="51.9" width="78" height="0.9" fill="#7da4c4"/><rect x="8" y="8" width="38" height="40" fill="none" stroke="#999" stroke-width="0.5"/><path d="M10 16 H44 M10 26 H44 M10 36 H44 M27 8 V48" stroke="#bbb" stroke-width="0.5"/><rect x="52" y="24" width="40" height="1.5" fill="#bbb"/><rect x="58" y="29" width="28" height="1.5" fill="#bbb"/></svg>
<div id="t73" class="t" style="left:254px;top:871.14px;font-size:12px;line-height:12px;color:#444444;font-weight:400;font-family:'Liberation Sans', sans-serif;transform:scaleX(0.9286);">7</div>
<div class="r" style="left:275.0px;top:947.5999999999999px;width:100px;height:56.5px;background:#d0d0d0;"></div><svg class="r" style="left:275.5px;top:948.0999999999999px;" width="99" height="55.5" viewBox="0 0 99 55.5"><rect width="99" height="55.5" fill="#fff"/><path d="M3 52.5 L8 47.5 V52.5z" fill="#0b3c6e"/><rect x="9" y="51.9" width="78" height="0.9" fill="#7da4c4"/><rect x="30" y="5" width="40" height="1.5" fill="#aaa"/><rect x="44" y="9" width="12" height="1.5" fill="#aaa"/><rect x="12" y="15" width="76" height="40" fill="#eef3f8"/><rect x="14" y="17" width="30" height="1" fill="#bbb"/><rect x="52" y="17" width="30" height="1" fill="#bbb"/><rect x="14" y="22" width="30" height="1" fill="#bbb"/><rect x="52" y="22" width="30" height="1" fill="#bbb"/><rect x="14" y="27" width="30" height="1" fill="#bbb"/><rect x="52" y="27" width="30" height="1" fill="#bbb"/><rect x="14" y="32" width="30" height="1" fill="#bbb"/><rect x="52" y="32" width="30" height="1" fill="#bbb"/><rect x="14" y="37" width="30" height="1" fill="#bbb"/><rect x="52" y="37" width="30" height="1" fill="#bbb"/><rect x="14" y="42" width="30" height="1" fill="#bbb"/><rect x="52" y="42" width="30" height="1" fill="#bbb"/><rect x="14" y="47" width="30" height="1" fill="#bbb"/><rect x="52" y="47" width="30" height="1" fill="#bbb"/></svg>
<div id="t74" class="t" style="left:254px;top:946.74px;font-size:12px;line-height:12px;color:#444444;font-weight:400;font-family:'Liberation Sans', sans-serif;transform:scaleX(0.9286);">8</div>
<div class="r" style="left:242px;top:993px;width:1436px;height:3px;background:#d4d4d4;"></div>
<div class="r" style="left:1662.5px;top:400px;width:15px;height:593px;background:#f0f0f0;"></div>
<div class="r" style="left:1662.5px;top:402px;width:14.5px;height:61px;background:#ffffff;border:1px solid #c4c4c4;box-sizing:border-box;"></div>
<div class="r" style="left:1662.5px;top:415px;width:14.5px;height:1.5px;background:#c4c4c4;"></div>
<svg class="r" style="left:1665px;top:405px;" width="10" height="7" viewBox="0 0 10 7"><path d="M1.5 5.5 L5 2 L8.5 5.5z" fill="#222"/></svg>
<div class="r" style="left:1662.5px;top:928.5px;width:14.5px;height:14px;background:#ffffff;border:1px solid #c4c4c4;box-sizing:border-box;"></div>
<svg class="r" style="left:1665px;top:932px;" width="10" height="7" viewBox="0 0 10 7"><path d="M1.5 1.5 L5 5 L8.5 1.5z" fill="#222"/></svg>
<svg class="r" style="left:1664px;top:945px;" width="12" height="28" viewBox="0 0 12 28"><path d="M6 1 L11 6 H1z M6 5.5 L11 10.5 H1z" fill="#666"/><path d="M1 17 H11 L6 22z M1 21.5 H11 L6 26.5z" fill="#666"/></svg>
<div class="r" style="left:242px;top:996px;width:1436px;height:24px;background:#f3f3f3;"></div>
<div id="t75" class="t" style="left:253.2px;top:1001.87px;font-size:10.5px;line-height:10.5px;color:#5a5a5a;font-weight:400;font-family:'Liberation Sans', sans-serif;transform:scaleX(0.8985);">Слайд 1 из 11</div>
<div id="t76" class="t" style="left:332.3px;top:1001.87px;font-size:10.5px;line-height:10.5px;color:#5a5a5a;font-weight:400;font-family:'Liberation Sans', sans-serif;transform:scaleX(0.9026);">русский</div>
<svg class="r" style="left:381px;top:999px;" width="18" height="16" viewBox="0 0 18 16"><path d="M7 2 Q2 3 2.5 8 Q3 13 8 13.5" fill="none" stroke="#666" stroke-width="1"/><path d="M8 2 V6 M6 4 H10" stroke="#666" stroke-width="1"/><path d="M10 9 L16 15 M16 9 L10 15" stroke="#333" stroke-width="1.4"/></svg>
<div id="t77" class="t" style="left:399.5px;top:1001.87px;font-size:10.5px;line-height:10.5px;color:#333333;font-weight:700;font-family:'Liberation Sans', sans-serif;transform:scaleX(0.9243);">Специальные возможности: проверьте рекомендации</div>
<svg class="r" style="left:1180px;top:999px;" width="12" height="14" viewBox="0 0 12 14"><path d="M6 1 L9 4 H3z" fill="#777"/><path d="M1 7 H11 M1 9.5 H11 M1 12 H11" stroke="#777" stroke-width="1"/></svg>
<div id="t78" class="t" style="left:1195px;top:1001.87px;font-size:10.5px;line-height:10.5px;color:#444;font-weight:400;font-family:'Liberation Sans', sans-serif;transform:scaleX(0.9150);">Заметки</div>
<svg class="r" style="left:1250px;top:999px;" width="15" height="14" viewBox="0 0 15 14"><path d="M1.5 1.5 H13.5 V9.5 H6 L3 12.5 V9.5 H1.5z" fill="#555"/></svg>
<div id="t79" class="t" style="left:1266px;top:1001.87px;font-size:10.5px;line-height:10.5px;color:#444;font-weight:400;font-family:'Liberation Sans', sans-serif;transform:scaleX(0.9230);">Примечания</div>
<div class="r" style="left:1341.4px;top:996.5px;width:37px;height:18px;background:#cfcfcf;"></div>
<svg class="r" style="left:1352px;top:998px;" width="16" height="14" viewBox="0 0 16 14"><rect x="1.5" y="1.5" width="13" height="11" fill="none" stroke="#777" stroke-width="1"/><rect x="4" y="3.5" width="9" height="6" fill="none" stroke="#777" stroke-width="0.9"/><path d="M4 3.5 V12" stroke="#777"/></svg>
<svg class="r" style="left:1389px;top:998px;" width="16" height="14" viewBox="0 0 16 14"><rect x="1.5" y="1.5" width="5" height="4.5" fill="none" stroke="#777"/><rect x="9" y="1.5" width="5" height="4.5" fill="none" stroke="#777"/><rect x="1.5" y="8" width="5" height="4.5" fill="none" stroke="#777"/><rect x="9" y="8" width="5" height="4.5" fill="none" stroke="#777"/></svg>
<svg class="r" style="left:1426px;top:998px;" width="16" height="14" viewBox="0 0 16 14"><path d="M1.5 2 H7 Q8 2 8 3 V12.5 H1.5z M14.5 2 H9 Q8 2 8 3 V12.5 H14.5z" fill="none" stroke="#777"/><path d="M3 5 H6 M3 7.5 H6 M10 5 H13 M10 7.5 H13" stroke="#999" stroke-width="0.8"/></svg>
<svg class="r" style="left:1464px;top:998px;" width="16" height="14" viewBox="0 0 16 14"><path d="M1.5 2 H14.5 M3 2 V7.5 H13 V2 M8 7.5 V12 M5 12.5 H11" fill="none" stroke="#777"/></svg>
<div class="r" style="left:1496.3px;top:1006px;width:7px;height:1px;background:#555;"></div>
<div class="r" style="left:1508px;top:1006px;width:93.5px;height:1px;background:#555;"></div>
<div class="r" style="left:1545.5px;top:1001px;width:4.5px;height:10.5px;background:#444;"></div>
<div class="r" style="left:1554px;top:1003px;width:1px;height:6px;background:#555;"></div>
<svg class="r" style="left:1604px;top:1001px;" width="10" height="10" viewBox="0 0 10 10"><path d="M5 1 V9 M1 5 H9" stroke="#555" stroke-width="1"/></svg>
<div id="t80" class="t" style="left:1625.8px;top:1001.87px;font-size:10.5px;line-height:10.5px;color:#555;font-weight:400;font-family:'Liberation Sans', sans-serif;transform:scaleX(0.8833);">85 %</div>
<svg class="r" style="left:1660px;top:1000px;" width="13" height="13" viewBox="0 0 13 13"><rect x="1" y="1" width="11" height="11" fill="none" stroke="#777"/><path d="M3 3 L5.5 5.5 M10 3 L7.5 5.5 M3 10 L5.5 7.5 M10 10 L7.5 7.5" stroke="#777" stroke-width="1"/></svg>
<div class="r" style="left:0px;top:1020px;width:1918px;height:1px;background:#d2d2d2;"></div>
<div class="r" style="left:0px;top:1021px;width:1918px;height:7px;background:#ededed;"></div>
<div class="r" style="left:528px;top:408px;width:1020px;height:575px;background:#c6c6c6;"></div>
<svg class="r" style="left:529px;top:409px;" width="1018" height="573" viewBox="0 0 1018 573"><defs>
<linearGradient id="navy" x1="0" y1="0" x2="1" y2="1"><stop offset="0" stop-color="#0c3d70"/><stop offset="0.45" stop-color="#0b3b6c"/><stop offset="0.7" stop-color="#0b3d6e"/><stop offset="1" stop-color="#0a386a"/></linearGradient>
<filter id="blur1"><feGaussianBlur stdDeviation="1"/></filter></defs>
<rect width="1018" height="573" fill="#ffffff"/>
<g filter="url(#blur1)" opacity="0.55"><path d="M520.5,0 L637.5,573" stroke="#b8b8c0" stroke-width="2.2"/><path d="M534,0 L651,573" stroke="#b8b8c0" stroke-width="2.2"/></g>
<polygon points="547.0,0.0 1018.0,0.0 1018.0,573.0 665.0,573.0" fill="url(#navy)"/>
<path d="M547,0 L665,573" stroke="#d8e8f4" stroke-width="1" opacity="0.7"/>
<clipPath id="navclip"><polygon points="547.0,0.0 1018.0,0.0 1018.0,573.0 665.0,573.0"/></clipPath>
<g clip-path="url(#navclip)"><path d="M641,573 L896,0 L941,0 L686,573z" fill="#06335f" opacity="0.10"/>
<path d="M771,573 L1018,31 L1018,111 L811,573z" fill="#06335f" opacity="0.10"/></g>
<polygon points="923.0,392.5 1006.3,392.5 934.0,573.0 850.8,573.0" fill="#0a5f97"/>
<polygon points="861.7,441.7 944.7,441.7 892.2,573.0 809.2,573.0" fill="#29abe2"/>
<polygon points="800.0,489.4 883.2,489.4 849.5,573.0 766.5,573.0" fill="#ffffff"/>
</svg>
<svg class="r" style="left:1264.5px;top:441.5px;" width="72" height="96" viewBox="0 0 72 96"><rect x="47.6" y="1.0" width="21.1" height="21.1" rx="3" fill="none" stroke="#fff" stroke-width="1.8"/><path d="M47.2 22.1 L68.7 0.6 V19.1 Q68.7 22.1 65.7 22.1z" fill="#fff"/><rect x="24.3" y="24.3" width="21.1" height="21.1" rx="3" fill="none" stroke="#fff" stroke-width="1.8"/><path d="M23.900000000000002 45.400000000000006 L45.400000000000006 23.900000000000002 V42.400000000000006 Q45.400000000000006 45.400000000000006 42.400000000000006 45.400000000000006z" fill="#fff"/><path d="M46.6 37.002 L60.302 23.3 H65.7 Q69.3 23.3 69.3 26.3 V42.400000000000006 Q69.3 46.00000000000001 65.7 46.00000000000001 H49.6 Q46.6 46.00000000000001 46.6 42.400000000000006z" fill="#fff"/><rect x="1.0" y="47.6" width="21.1" height="21.1" rx="3" fill="none" stroke="#fff" stroke-width="1.8"/><path d="M0.6 68.7 L22.1 47.2 V65.7 Q22.1 68.7 19.1 68.7z" fill="#fff"/><path d="M23.3 60.302 L37.002 46.6 H42.400000000000006 Q46.00000000000001 46.6 46.00000000000001 49.6 V65.7 Q46.00000000000001 69.3 42.400000000000006 69.3 H26.3 Q23.3 69.3 23.3 65.7z" fill="#fff"/><rect x="46.6" y="46.6" width="22.700000000000003" height="22.700000000000003" rx="3.5" fill="#fff"/><path d="M0.0 83.602 L13.702 69.9 H19.1 Q22.700000000000003 69.9 22.700000000000003 72.9 V89.0 Q22.700000000000003 92.6 19.1 92.6 H3.0 Q0.0 92.6 0.0 89.0z" fill="#fff"/><rect x="23.3" y="69.9" width="22.700000000000003" height="22.700000000000003" rx="3.5" fill="#fff"/><rect x="46.6" y="69.9" width="22.700000000000003" height="22.700000000000003" rx="3.5" fill="#fff"/></svg>
<div id="t81" class="t" style="left:1344.5px;top:441.75px;font-size:10.4px;line-height:10.4px;color:#ffffff;font-weight:700;font-family:'Liberation Sans', sans-serif;transform:scaleX(0.9384);">Національний</div>
<div id="t82" class="t" style="left:1345px;top:452.25px;font-size:10.4px;line-height:10.4px;color:#ffffff;font-weight:700;font-family:'Liberation Sans', sans-serif;transform:scaleX(0.9600);">технічний університет</div>
<div id="t83" class="t" style="left:1342.4px;top:468.34px;font-size:21px;line-height:21px;color:#ffffff;font-weight:700;font-family:'Liberation Sans', sans-serif;transform:scaleX(1.0344);">ДНІПРОВСЬКА</div>
<div id="t84" class="t" style="left:1344.5px;top:491.34px;font-size:21px;line-height:21px;color:#ffffff;font-weight:700;font-family:'Liberation Sans', sans-serif;transform:scaleX(1.0766);">ПОЛІТЕХНІКА</div>
<div id="t85" class="t" style="left:1343px;top:514.44px;font-size:21px;line-height:21px;color:#ffffff;font-weight:700;font-family:'Liberation Sans', sans-serif;transform:scaleX(1.0255);">1899</div>
<div id="t86" class="t" style="left:577.6px;top:449.70px;font-size:17.3px;line-height:17.3px;color:#000000;font-weight:400;font-family:'Liberation Serif', serif;transform:scaleX(0.9778);">Інститут електроенергетики</div>
<div id="t87" class="t" style="left:577.6px;top:469.90px;font-size:17.3px;line-height:17.3px;color:#000000;font-weight:400;font-family:'Liberation Serif', serif;transform:scaleX(0.9764);">Електротехнічний факультет</div>
<div id="t88" class="t" style="left:577.6px;top:490.20px;font-size:17.3px;line-height:17.3px;color:#000000;font-weight:400;font-family:'Liberation Serif', serif;transform:scaleX(0.9761);">Кафедра електропривода</div>
<div id="t89" class="t" style="left:577.6px;top:610.14px;font-size:30.5px;line-height:30.5px;color:#000000;font-weight:700;font-family:'Liberation Serif', serif;transform:scaleX(1.1073);">Цифрова трансформація</div>
<div id="t90" class="t" style="left:577.6px;top:646.04px;font-size:30.5px;line-height:30.5px;color:#000000;font-weight:700;font-family:'Liberation Serif', serif;transform:scaleX(1.1114);">підстанцій на основі стандартів</div>
<div id="t91" class="t" style="left:577.6px;top:681.84px;font-size:30.5px;line-height:30.5px;color:#000000;font-weight:700;font-family:'Liberation Serif', serif;transform:scaleX(1.1068);">IEC 61850 та IEC 61499</div>
<div class="r" style="left:575px;top:754.8px;width:510px;height:2px;background:#7f7f7f;"></div>
<div id="t92" class="t" style="left:574.4px;top:776.85px;font-size:19.2px;line-height:19.2px;color:#000000;font-weight:400;font-family:'Liberation Serif', serif;transform:scaleX(0.9909);">Лобода Анна Юріївна, ст. гр. ЕЕм-25-2</div>
<div id="t93" class="t" style="left:574.4px;top:799.85px;font-size:19.2px;line-height:19.2px;color:#000000;font-weight:400;font-family:'Liberation Serif', serif;transform:scaleX(0.9925);">Науковий керівник: к.т.н., доцент кафедри електропривода</div>
<div id="t94" class="t" style="left:574.4px;top:822.15px;font-size:19.2px;line-height:19.2px;color:#000000;font-weight:400;font-family:'Liberation Serif', serif;transform:scaleX(0.9911);">Лисенко Олександра Геннадіївна</div>
<svg class="r" style="left:738px;top:818px;" width="40" height="4" viewBox="0 0 40 4"><path d="M0 2 Q1 0 2 2 T4 2 T6 2 T8 2 T10 2 T12 2 T14 2 T16 2 T18 2 T20 2 T22 2 T24 2 T26 2 T28 2 T30 2 T32 2 T34 2 T36 2 T38 2" fill="none" stroke="#e04040" stroke-width="0.7" opacity="0.7"/></svg>
<svg class="r" style="left:1131px;top:698px;" width="12" height="18" viewBox="0 0 12 18"><path d="M1 1 V14 L4 11 L6.5 16.5 L8.5 15.5 L6 10.5 H10z" fill="#fff" stroke="#222" stroke-width="0.9"/></svg>
<div class="r" style="left:17px;top:970px;width:248px;height:32.5px;background:rgba(98,98,98,0.9);border-radius:5px;"></div>
<div id="t95" class="t" style="left:25.5px;top:979.40px;font-size:16.3px;line-height:16.3px;color:#ffffff;font-weight:400;font-family:'Liberation Sans', sans-serif;transform:scaleX(1.0061);">Лобода Анна Юріївна</div>
<div class="r" style="left:200px;top:986.5px;width:16px;height:1.3px;background:#a8a8a8;"></div>
<svg class="r" style="left:231px;top:977px;" width="19" height="19" viewBox="0 0 19 19"><path d="M9.5 1 V18 M1 9.5 H18" stroke="#fff" stroke-width="1.3"/></svg>
</body></html>
